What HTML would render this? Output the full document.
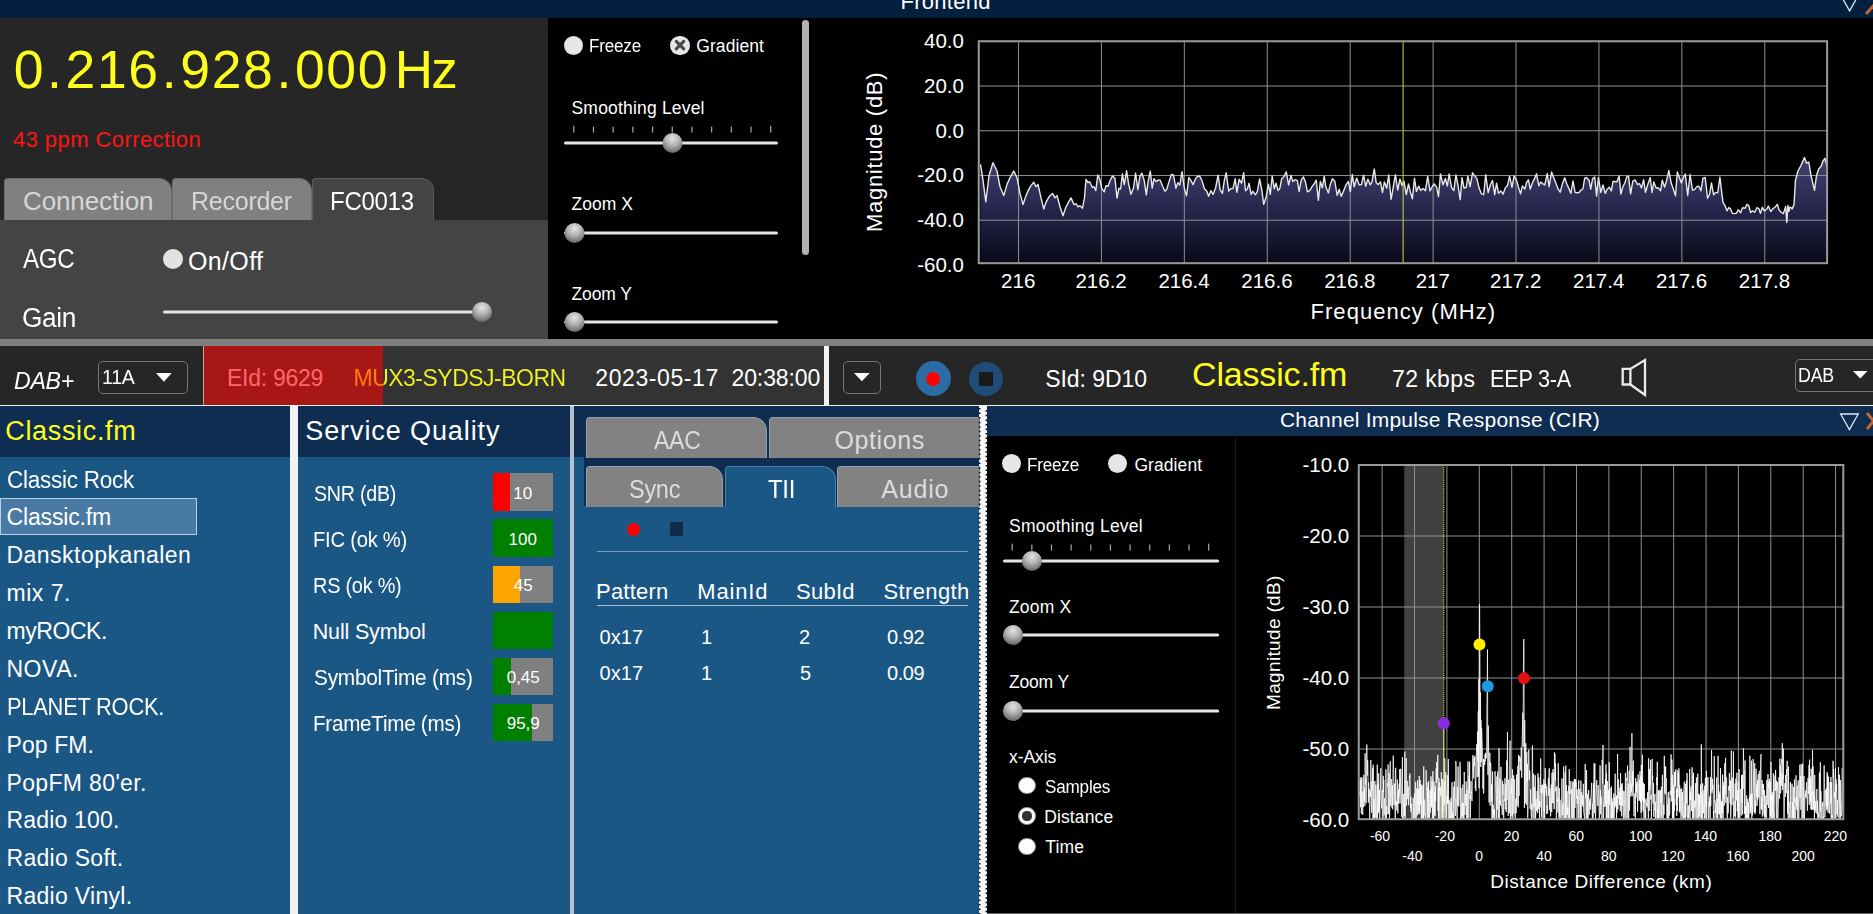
<!DOCTYPE html>
<html><head><meta charset="utf-8"><title>DAB</title><style>
html,body{margin:0;padding:0;background:#000;}
body{width:1873px;height:914px;overflow:hidden;position:relative;font-family:"Liberation Sans", sans-serif;}
#root{position:absolute;left:0;top:0;width:1873px;height:914px;overflow:hidden;background:#000;}
#root div,#root svg{position:absolute;}
.t{position:absolute;white-space:pre;line-height:1;font-family:"Liberation Sans", sans-serif;}
</style></head>
<body><div id="root">
<div style="left:0px;top:0px;width:1873px;height:18px;background:#03203f;"></div>
<div style="left:0px;top:18px;width:548px;height:202px;background:#262626;"></div>
<div style="left:0px;top:220px;width:548px;height:119px;background:#444444;"></div>
<div style="left:0px;top:339px;width:1873px;height:7px;background:#808080;"></div>
<div style="left:0px;top:346px;width:1873px;height:59px;background:#262626;"></div>
<div style="left:203px;top:346px;width:1px;height:59px;background:#c9a3a3;"></div>
<div style="left:204px;top:346px;width:179px;height:59px;background:#a81717;"></div>
<div style="left:383px;top:346px;width:441px;height:59px;background:#333333;"></div>
<div style="left:824px;top:346px;width:5px;height:59px;background:#f4f4f4;"></div>
<div style="left:0px;top:405px;width:1873px;height:1px;background:#f0f0f0;"></div>
<div style="left:0px;top:406px;width:290px;height:51px;background:#0f2d50;"></div>
<div style="left:0px;top:457px;width:290px;height:457px;background:#1b5785;"></div>
<div style="left:290px;top:406px;width:8px;height:508px;background:#f2f2f4;"></div>
<div style="left:298px;top:406px;width:272px;height:51px;background:#0f2d50;"></div>
<div style="left:298px;top:457px;width:272px;height:457px;background:#1b5785;"></div>
<div style="left:570px;top:406px;width:4px;height:508px;background:#b4c0cc;"></div>
<div style="left:574px;top:406px;width:405px;height:100px;background:#0f2d50;"></div>
<div style="left:574px;top:457px;width:10px;height:49px;background:#1b5785;"></div>
<div style="left:574px;top:506px;width:406px;height:408px;background:#1b5785;"></div>
<div style="left:979px;top:406px;width:7.5px;height:508px;background:#f6f6f8;"></div>
<div style="left:987px;top:406px;width:886px;height:30px;background:#0f2d50;"></div>
<div style="left:987px;top:913px;width:886px;height:1px;background:#666;"></div>
<span class="t" style="left:900.50px;top:-9px;font-size:22px;color:#ffffff;letter-spacing:0.283px;">Frontend</span>
<svg style="left:1838px;top:0" width="35" height="18" viewBox="0 0 35 18"><path d="M2.3 -5.6 L11.6 10.9 L20.9 -5.6" fill="none" stroke="#dfe6f0" stroke-width="1.3"/><path d="M28 14 L37 4" stroke="#c8642d" stroke-width="3"/></svg>
<span class="t" style="left:13.63px;top:43px;font-size:53.5px;color:#ffff1e;">0</span>
<span class="t" style="left:47.01px;top:43px;font-size:53.5px;color:#ffff1e;">.</span>
<span class="t" style="left:65.53px;top:43px;font-size:53.5px;color:#ffff1e;">2</span>
<span class="t" style="left:96.93px;top:43px;font-size:53.5px;color:#ffff1e;">1</span>
<span class="t" style="left:128.33px;top:43px;font-size:53.5px;color:#ffff1e;">6</span>
<span class="t" style="left:161.71px;top:43px;font-size:53.5px;color:#ffff1e;">.</span>
<span class="t" style="left:180.23px;top:43px;font-size:53.5px;color:#ffff1e;">9</span>
<span class="t" style="left:211.63px;top:43px;font-size:53.5px;color:#ffff1e;">2</span>
<span class="t" style="left:243.03px;top:43px;font-size:53.5px;color:#ffff1e;">8</span>
<span class="t" style="left:276.41px;top:43px;font-size:53.5px;color:#ffff1e;">.</span>
<span class="t" style="left:294.93px;top:43px;font-size:53.5px;color:#ffff1e;">0</span>
<span class="t" style="left:326.33px;top:43px;font-size:53.5px;color:#ffff1e;">0</span>
<span class="t" style="left:357.73px;top:43px;font-size:53.5px;color:#ffff1e;">0</span>
<span class="t" style="left:394.75px;top:43px;font-size:53px;color:#ffff1e;letter-spacing:-1.825px;">Hz</span>
<span class="t" style="left:13.00px;top:129px;font-size:22px;color:#ff1414;letter-spacing:0.423px;">43 ppm Correction</span>
<div style="left:4px;top:178px;width:168.3px;height:42px;background:#808080;border:1px solid #6c6c6c;border-bottom:none;border-radius:4px 13px 0 0;box-sizing:border-box;"></div>
<div style="left:172px;top:178px;width:140.2px;height:42px;background:#808080;border:1px solid #6c6c6c;border-bottom:none;border-radius:4px 13px 0 0;box-sizing:border-box;"></div>
<div style="left:312px;top:178px;width:122px;height:42px;background:#444444;border:1px solid #5e5e5e;border-bottom:none;border-radius:4px 13px 0 0;box-sizing:border-box;"></div>
<span class="t" style="left:23.00px;top:188px;font-size:26px;color:#d6d6d4;letter-spacing:-0.120px;">Connection</span>
<span class="t" style="left:190.57px;top:188px;font-size:26px;color:#d6d6d4;transform-origin:0 0;transform:scaleX(0.9652);letter-spacing:-0.312px;">Recorder</span>
<span class="t" style="left:330.15px;top:188px;font-size:26px;color:#ffffff;transform-origin:0 0;transform:scaleX(0.9240);letter-spacing:-0.312px;">FC0013</span>
<span class="t" style="left:22.50px;top:246px;font-size:27px;color:#ffffff;transform-origin:0 0;transform:scaleX(0.8934);letter-spacing:-0.324px;">AGC</span>
<div style="left:163px;top:249px;width:20px;height:20px;border-radius:50%;background:#e2e2e2;"></div>
<span class="t" style="left:188.00px;top:249px;font-size:25px;color:#ffffff;letter-spacing:0.353px;">On/Off</span>
<span class="t" style="left:21.53px;top:305px;font-size:27px;color:#ffffff;transform-origin:0 0;transform:scaleX(0.9714);letter-spacing:-0.324px;">Gain</span>
<svg width="0" height="0" style="left:0;top:0"><defs><radialGradient id="thumb" cx="50%" cy="28%" r="75%"><stop offset="0" stop-color="#e4e4e4"/><stop offset="0.45" stop-color="#b4b4b4"/><stop offset="1" stop-color="#5e5e5e"/></radialGradient></defs></svg>
<svg style="left:149px;top:290px" width="355" height="36" viewBox="149 290 355 36"><rect x="163" y="310.4" width="327" height="3.2" rx="1.6" fill="#e6e6e6"/><circle cx="482" cy="312" r="10" fill="url(#thumb)"/></svg>
<div style="left:563.6999999999999px;top:35.5px;width:19.2px;height:19.2px;border-radius:50%;background:#e6e6e6;"></div>
<span class="t" style="left:588.52px;top:38px;font-size:17.5px;color:#ffffff;transform-origin:0 0;transform:scaleX(0.9771);letter-spacing:-0.210px;">Freeze</span>
<div style="left:670.4px;top:35.5px;width:19.2px;height:19.2px;border-radius:50%;background:#e6e6e6;"></div>
<svg style="left:670px;top:35px" width="20" height="20" viewBox="0 0 20 20"><path d="M6.3 6.4 L13.7 13.8 M13.7 6.4 L6.3 13.8" stroke="#484848" stroke-width="3.1" stroke-linecap="round"/></svg>
<span class="t" style="left:696.30px;top:38px;font-size:17.5px;color:#ffffff;letter-spacing:0.063px;">Gradient</span>
<span class="t" style="left:571.50px;top:100px;font-size:17.5px;color:#ffffff;letter-spacing:0.188px;">Smoothing Level</span>
<svg style="left:550px;top:120.6px" width="242" height="36" viewBox="550 120.6 242 36"><rect x="573.20" y="125.40" width="1.2" height="6.70" fill="#a8a8a8"/><rect x="592.89" y="126.20" width="1.2" height="5.90" fill="#a8a8a8"/><rect x="612.58" y="126.20" width="1.2" height="5.90" fill="#a8a8a8"/><rect x="632.27" y="126.20" width="1.2" height="5.90" fill="#a8a8a8"/><rect x="651.96" y="126.20" width="1.2" height="5.90" fill="#a8a8a8"/><rect x="671.65" y="126.20" width="1.2" height="5.90" fill="#a8a8a8"/><rect x="691.34" y="126.20" width="1.2" height="5.90" fill="#a8a8a8"/><rect x="711.03" y="126.20" width="1.2" height="5.90" fill="#a8a8a8"/><rect x="730.72" y="126.20" width="1.2" height="5.90" fill="#a8a8a8"/><rect x="750.41" y="126.20" width="1.2" height="5.90" fill="#a8a8a8"/><rect x="770.10" y="125.40" width="1.2" height="6.70" fill="#a8a8a8"/><rect x="564" y="141.0" width="214" height="3.2" rx="1.6" fill="#e6e6e6"/><circle cx="672.5" cy="142.6" r="10" fill="url(#thumb)"/></svg>
<span class="t" style="left:571.50px;top:196px;font-size:17.5px;color:#ffffff;letter-spacing:0.041px;">Zoom X</span>
<svg style="left:550px;top:210.6px" width="242" height="36" viewBox="550 210.6 242 36"><rect x="564" y="231.0" width="214" height="3.2" rx="1.6" fill="#e6e6e6"/><circle cx="574.5" cy="232.6" r="10" fill="url(#thumb)"/></svg>
<span class="t" style="left:571.50px;top:286px;font-size:17.5px;color:#ffffff;letter-spacing:-0.119px;">Zoom Y</span>
<svg style="left:550px;top:300.4px" width="242" height="36" viewBox="550 300.4 242 36"><rect x="564" y="320.79999999999995" width="214" height="3.2" rx="1.6" fill="#e6e6e6"/><circle cx="574.5" cy="322.4" r="10" fill="url(#thumb)"/></svg>
<div style="left:802px;top:20px;width:7px;height:235px;border-radius:3.5px;background:#b2b2b2;"></div>
<span class="t" style="left:13.75px;top:369px;font-size:24.5px;color:#ffffff;transform-origin:0 0;transform:scaleX(0.9450);letter-spacing:-0.294px;font-style:italic;">DAB+</span>
<div style="left:98px;top:361px;width:90px;height:33px;border:1.5px solid #767676;border-radius:5px;box-sizing:border-box;background:#262626;"></div>
<span class="t" style="left:101.52px;top:367px;font-size:20px;color:#ffffff;transform-origin:0 0;transform:scaleX(0.9765);letter-spacing:-0.240px;">11A</span>
<svg style="left:153.5px;top:371px" width="19.75" height="12.75" viewBox="153.5 371 19.75 12.75"><path d="M155.5 373 L171.25 373 L163.375 381.75 Z" fill="#ffffff"/></svg>
<span class="t" style="left:227.00px;top:367px;font-size:23px;color:#ff6767;letter-spacing:-0.272px;">EId: 9629</span>
<span class="t" style="left:353.50px;top:367px;font-size:23px;color:#ff7f0e;letter-spacing:-0.514px;color:transparent;background:linear-gradient(90deg,#ff7f0e 0,#ff7f0e 29.70px,#f2f21e 29.70px);-webkit-background-clip:text;background-clip:text;">MUX3-SYDSJ-BORN</span>
<span class="t" style="left:595.25px;top:367px;font-size:23px;color:#ffffff;letter-spacing:0.599px;">2023-05-17</span>
<span class="t" style="left:731.50px;top:367px;font-size:23px;color:#ffffff;letter-spacing:-0.105px;">20:38:00</span>
<div style="left:842.6px;top:361px;width:38px;height:33px;border:1.5px solid #767676;border-radius:5px;box-sizing:border-box;background:#262626;"></div>
<svg style="left:851.75px;top:371px" width="19.75" height="12.25" viewBox="851.75 371 19.75 12.25"><path d="M853.75 373 L869.5 373 L861.625 381.25 Z" fill="#ffffff"/></svg>
<div style="left:915.75px;top:361.25px;width:35.0px;height:35.0px;border-radius:50%;background:#2a6ca3;"></div>
<div style="left:926.25px;top:371.75px;width:14px;height:14px;border-radius:50%;background:#ff0000;"></div>
<div style="left:969.25px;top:361.75px;width:34px;height:34px;border-radius:50%;background:#1f4d78;"></div>
<div style="left:979.25px;top:371.5px;width:14px;height:14px;background:#1a1a1a;"></div>
<span class="t" style="left:1045.25px;top:368px;font-size:23px;color:#ffffff;letter-spacing:-0.062px;">SId: 9D10</span>
<span class="t" style="left:1192.00px;top:357px;font-size:34px;color:#ffff1e;letter-spacing:-0.163px;">Classic.fm</span>
<span class="t" style="left:1392.00px;top:368px;font-size:23px;color:#ffffff;letter-spacing:0.407px;">72 kbps</span>
<span class="t" style="left:1489.81px;top:368px;font-size:23px;color:#ffffff;transform-origin:0 0;transform:scaleX(0.9425);letter-spacing:-0.276px;">EEP 3-A</span>
<svg style="left:1616px;top:354px" width="40" height="48" viewBox="1616 354 40 48"><path d="M1622.7 368.9 H1630.4 L1645 360 V395 L1630.4 384.5 H1622.7 Z M1630.4 368.9 V384.5" fill="none" stroke="#ececec" stroke-width="2.3" stroke-linejoin="miter"/></svg>
<div style="left:1795px;top:359.2px;width:90px;height:32.6px;border:1.5px solid #767676;border-radius:5px;box-sizing:border-box;background:#262626;"></div>
<span class="t" style="left:1797.86px;top:365px;font-size:20px;color:#ffffff;transform-origin:0 0;transform:scaleX(0.8905);letter-spacing:-0.240px;">DAB</span>
<svg style="left:1850.5px;top:369.25px" width="18.5" height="11.5" viewBox="1850.5 369.25 18.5 11.5"><path d="M1852.5 371.25 L1867 371.25 L1859.75 378.75 Z" fill="#ffffff"/></svg>
<span class="t" style="left:5.25px;top:418px;font-size:27px;color:#ffff1e;letter-spacing:0.665px;">Classic.fm</span>
<div style="left:0px;top:497.5px;width:197px;height:37px;background:#497aa3;border:1px solid #b9cfe2;box-sizing:border-box;"></div>
<span class="t" style="left:6.52px;top:469px;font-size:23px;color:#ffffff;transform-origin:0 0;transform:scaleX(0.9797);letter-spacing:-0.276px;">Classic Rock</span>
<span class="t" style="left:6.50px;top:506px;font-size:23px;color:#ffffff;letter-spacing:-0.156px;">Classic.fm</span>
<span class="t" style="left:6.50px;top:544px;font-size:23px;color:#ffffff;letter-spacing:0.468px;">Dansktopkanalen</span>
<span class="t" style="left:6.50px;top:582px;font-size:23px;color:#ffffff;letter-spacing:0.510px;">mix 7.</span>
<span class="t" style="left:6.50px;top:620px;font-size:23px;color:#ffffff;letter-spacing:-0.435px;">myROCK.</span>
<span class="t" style="left:6.50px;top:658px;font-size:23px;color:#ffffff;letter-spacing:0.506px;">NOVA.</span>
<span class="t" style="left:6.55px;top:696px;font-size:23px;color:#ffffff;transform-origin:0 0;transform:scaleX(0.9524);letter-spacing:-0.276px;">PLANET ROCK.</span>
<span class="t" style="left:6.50px;top:734px;font-size:23px;color:#ffffff;letter-spacing:0.080px;">Pop FM.</span>
<span class="t" style="left:6.50px;top:772px;font-size:23px;color:#ffffff;letter-spacing:0.347px;">PopFM 80'er.</span>
<span class="t" style="left:6.50px;top:809px;font-size:23px;color:#ffffff;letter-spacing:0.182px;">Radio 100.</span>
<span class="t" style="left:6.50px;top:847px;font-size:23px;color:#ffffff;letter-spacing:0.285px;">Radio Soft.</span>
<span class="t" style="left:6.50px;top:885px;font-size:23px;color:#ffffff;letter-spacing:0.303px;">Radio Vinyl.</span>
<span class="t" style="left:305.25px;top:418px;font-size:27px;color:#ffffff;letter-spacing:0.906px;">Service Quality</span>
<span class="t" style="left:313.75px;top:484px;font-size:21.5px;color:#ffffff;transform-origin:0 0;transform:scaleX(0.9127);letter-spacing:-0.258px;">SNR (dB)</span>
<div style="left:493px;top:473.3px;width:60px;height:37.3px;background:#808080;"></div>
<div style="left:493px;top:473.3px;width:17px;height:37.3px;background:#ff0000;"></div>
<span class="t" style="left:513.27px;top:485px;font-size:17px;color:#ffffff;">10</span>
<span class="t" style="left:312.81px;top:530px;font-size:21.5px;color:#ffffff;transform-origin:0 0;transform:scaleX(0.9390);letter-spacing:-0.258px;">FIC (ok %)</span>
<div style="left:493px;top:519.4px;width:60px;height:37.3px;background:#808080;"></div>
<div style="left:493px;top:519.4px;width:60px;height:37.3px;background:#008000;"></div>
<span class="t" style="left:508.55px;top:531px;font-size:17px;color:#ffffff;">100</span>
<span class="t" style="left:312.82px;top:576px;font-size:21.5px;color:#ffffff;transform-origin:0 0;transform:scaleX(0.9255);letter-spacing:-0.258px;">RS (ok %)</span>
<div style="left:493px;top:565.5px;width:60px;height:37.3px;background:#808080;"></div>
<div style="left:493px;top:565.5px;width:27px;height:37.3px;background:#ffa500;"></div>
<span class="t" style="left:513.77px;top:577px;font-size:17px;color:#ffffff;">45</span>
<span class="t" style="left:312.75px;top:622px;font-size:21.5px;color:#ffffff;letter-spacing:-0.168px;">Null Symbol</span>
<div style="left:493px;top:611.6px;width:60px;height:37.3px;background:#808080;"></div>
<div style="left:493px;top:611.6px;width:60px;height:37.3px;background:#008000;"></div>
<span class="t" style="left:313.75px;top:668px;font-size:21.5px;color:#ffffff;transform-origin:0 0;transform:scaleX(0.9687);letter-spacing:-0.258px;">SymbolTime (ms)</span>
<div style="left:493px;top:657.7px;width:60px;height:37.3px;background:#808080;"></div>
<div style="left:493px;top:657.7px;width:18.2px;height:37.3px;background:#008000;"></div>
<span class="t" style="left:506.68px;top:669px;font-size:17px;color:#ffffff;">0,45</span>
<span class="t" style="left:312.79px;top:714px;font-size:21.5px;color:#ffffff;transform-origin:0 0;transform:scaleX(0.9588);letter-spacing:-0.258px;">FrameTime (ms)</span>
<div style="left:493px;top:703.8px;width:60px;height:37.3px;background:#808080;"></div>
<div style="left:493px;top:703.8px;width:38.5px;height:37.3px;background:#008000;"></div>
<span class="t" style="left:506.68px;top:715px;font-size:17px;color:#ffffff;">95,9</span>
<div style="left:586px;top:417px;width:181px;height:40.5px;background:#828282;border:1px solid #93a0ad;border-bottom:none;border-radius:4px 14px 0 0;box-sizing:border-box;"></div>
<div style="left:768.5px;top:417px;width:211.5px;height:40.5px;overflow:hidden;"><div style="left:0;top:0;width:260px;height:40.5px;background:#828282;border:1px solid #93a0ad;border-bottom:none;border-radius:4px 14px 0 0;box-sizing:border-box;"></div></div>
<div style="left:586px;top:466px;width:137px;height:40.5px;background:#828282;border:1px solid #93a0ad;border-bottom:none;border-radius:4px 14px 0 0;box-sizing:border-box;"></div>
<div style="left:724.5px;top:466px;width:111.5px;height:40.5px;background:#1b5785;border:1px solid #4f7ea6;border-bottom:none;border-radius:4px 14px 0 0;box-sizing:border-box;"></div>
<div style="left:837px;top:466px;width:143px;height:40.5px;overflow:hidden;"><div style="left:0;top:0;width:200px;height:40.5px;background:#828282;border:1px solid #93a0ad;border-bottom:none;border-radius:4px 14px 0 0;box-sizing:border-box;"></div></div>
<span class="t" style="left:653.75px;top:428px;font-size:25px;color:#dcdcdc;transform-origin:0 0;transform:scaleX(0.9212);letter-spacing:-0.300px;">AAC</span>
<span class="t" style="left:834.50px;top:428px;font-size:25px;color:#dcdcdc;letter-spacing:0.599px;">Options</span>
<span class="t" style="left:629.06px;top:477px;font-size:25px;color:#dcdcdc;transform-origin:0 0;transform:scaleX(0.9402);letter-spacing:-0.300px;">Sync</span>
<span class="t" style="left:767.50px;top:477px;font-size:25px;color:#ffffff;transform-origin:0 0;transform:scaleX(0.9580);letter-spacing:-0.300px;">TII</span>
<span class="t" style="left:881.25px;top:477px;font-size:25px;color:#dcdcdc;letter-spacing:0.803px;">Audio</span>
<div style="left:626.5px;top:522.5px;width:13.5px;height:13.5px;border-radius:50%;background:#ff0000;"></div>
<div style="left:670px;top:522px;width:13px;height:13.75px;background:#0f2d4a;"></div>
<div style="left:597px;top:551px;width:371px;height:1px;background:#6f9bc0;"></div>
<span class="t" style="left:596.00px;top:581px;font-size:22px;color:#ffffff;letter-spacing:0.217px;">Pattern</span>
<span class="t" style="left:697.25px;top:581px;font-size:22px;color:#ffffff;letter-spacing:0.841px;">MainId</span>
<span class="t" style="left:796.00px;top:581px;font-size:22px;color:#ffffff;letter-spacing:0.248px;">SubId</span>
<span class="t" style="left:883.50px;top:581px;font-size:22px;color:#ffffff;letter-spacing:0.367px;">Strength</span>
<div style="left:597px;top:605px;width:371px;height:1px;background:#aebfd0;"></div>
<span class="t" style="left:599.50px;top:627px;font-size:20px;color:#ffffff;letter-spacing:0.085px;">0x17</span>
<span class="t" style="left:701.00px;top:627px;font-size:20px;color:#ffffff;">1</span>
<span class="t" style="left:799.00px;top:627px;font-size:20px;color:#ffffff;">2</span>
<span class="t" style="left:887.00px;top:627px;font-size:20px;color:#ffffff;letter-spacing:-0.434px;">0.92</span>
<span class="t" style="left:599.50px;top:663px;font-size:20px;color:#ffffff;letter-spacing:0.085px;">0x17</span>
<span class="t" style="left:701.00px;top:663px;font-size:20px;color:#ffffff;">1</span>
<span class="t" style="left:800.00px;top:663px;font-size:20px;color:#ffffff;">5</span>
<span class="t" style="left:887.00px;top:663px;font-size:20px;color:#ffffff;letter-spacing:-0.434px;">0.09</span>
<svg style="left:978px;top:406px" width="10" height="508"><line x1="1.6" y1="2" x2="1.6" y2="508" stroke="#0a0a14" stroke-width="1.7" stroke-dasharray="1.5 3.05"/><line x1="8.3" y1="4.3" x2="8.3" y2="508" stroke="#0a0a14" stroke-width="1.5" stroke-dasharray="1.5 3.05"/></svg>
<span class="t" style="left:1280.00px;top:409px;font-size:21px;color:#ffffff;letter-spacing:0.199px;">Channel Impulse Response (CIR)</span>
<svg style="left:1836px;top:408px" width="37" height="28" viewBox="1836 408 37 28"><path d="M1840.6 414 L1858.2 414 L1849.4 429.6 Z" fill="none" stroke="#dfe6f0" stroke-width="1.3"/><path d="M1867 413 L1880 429 M1867 429 L1880 413" stroke="#c8642d" stroke-width="3"/></svg>
<div style="left:1002.3px;top:454.1px;width:19.0px;height:19.0px;border-radius:50%;background:#e6e6e6;"></div>
<span class="t" style="left:1026.52px;top:457px;font-size:17.5px;color:#ffffff;transform-origin:0 0;transform:scaleX(0.9771);letter-spacing:-0.210px;">Freeze</span>
<div style="left:1108.1px;top:454.1px;width:19.0px;height:19.0px;border-radius:50%;background:#e6e6e6;"></div>
<span class="t" style="left:1134.40px;top:457px;font-size:17.5px;color:#ffffff;letter-spacing:0.077px;">Gradient</span>
<span class="t" style="left:1009.00px;top:518px;font-size:17.5px;color:#ffffff;letter-spacing:0.238px;">Smoothing Level</span>
<svg style="left:988.6px;top:538.8px" width="244.19999999999993" height="36" viewBox="988.6 538.8 244.19999999999993 36"><rect x="1011.20" y="543.50" width="1.2" height="6.80" fill="#a8a8a8"/><rect x="1030.85" y="544.30" width="1.2" height="6.00" fill="#a8a8a8"/><rect x="1050.49" y="544.30" width="1.2" height="6.00" fill="#a8a8a8"/><rect x="1070.13" y="544.30" width="1.2" height="6.00" fill="#a8a8a8"/><rect x="1089.78" y="544.30" width="1.2" height="6.00" fill="#a8a8a8"/><rect x="1109.43" y="544.30" width="1.2" height="6.00" fill="#a8a8a8"/><rect x="1129.07" y="544.30" width="1.2" height="6.00" fill="#a8a8a8"/><rect x="1148.72" y="544.30" width="1.2" height="6.00" fill="#a8a8a8"/><rect x="1168.36" y="544.30" width="1.2" height="6.00" fill="#a8a8a8"/><rect x="1188.01" y="544.30" width="1.2" height="6.00" fill="#a8a8a8"/><rect x="1207.65" y="543.50" width="1.2" height="6.80" fill="#a8a8a8"/><rect x="1002.6" y="559.1999999999999" width="216.19999999999993" height="3.2" rx="1.6" fill="#e6e6e6"/><circle cx="1031.5" cy="560.8" r="10" fill="url(#thumb)"/></svg>
<span class="t" style="left:1009.00px;top:599px;font-size:17.5px;color:#ffffff;letter-spacing:0.161px;">Zoom X</span>
<svg style="left:988.6px;top:613.4px" width="244.19999999999993" height="36" viewBox="988.6 613.4 244.19999999999993 36"><rect x="1002.6" y="633.8" width="216.19999999999993" height="3.2" rx="1.6" fill="#e6e6e6"/><circle cx="1012.6" cy="635.4" r="10" fill="url(#thumb)"/></svg>
<span class="t" style="left:1009.00px;top:674px;font-size:17.5px;color:#ffffff;letter-spacing:-0.179px;">Zoom Y</span>
<svg style="left:988.6px;top:688.7px" width="244.19999999999993" height="36" viewBox="988.6 688.7 244.19999999999993 36"><rect x="1002.6" y="709.1" width="216.19999999999993" height="3.2" rx="1.6" fill="#e6e6e6"/><circle cx="1012.5" cy="710.7" r="10" fill="url(#thumb)"/></svg>
<span class="t" style="left:1009.00px;top:749px;font-size:17.5px;color:#ffffff;letter-spacing:-0.078px;">x-Axis</span>
<div style="left:1018.3px;top:777.0999999999999px;width:17.4px;height:17.4px;border-radius:50%;background:#ffffff;border:1.6px solid #8c8c8c;box-sizing:border-box;"></div>
<span class="t" style="left:1045.20px;top:779px;font-size:17.5px;color:#ffffff;transform-origin:0 0;transform:scaleX(0.9780);letter-spacing:-0.210px;">Samples</span>
<div style="left:1018.3px;top:807.3px;width:17.4px;height:17.4px;border-radius:50%;background:#ffffff;border:1.6px solid #8c8c8c;box-sizing:border-box;"></div>
<div style="left:1022.4px;top:811.4px;width:9.2px;height:9.2px;border-radius:50%;background:#333333;"></div>
<span class="t" style="left:1044.20px;top:809px;font-size:17.5px;color:#ffffff;letter-spacing:0.135px;">Distance</span>
<div style="left:1018.3px;top:837.6999999999999px;width:17.4px;height:17.4px;border-radius:50%;background:#ffffff;border:1.6px solid #8c8c8c;box-sizing:border-box;"></div>
<span class="t" style="left:1045.20px;top:839px;font-size:17.5px;color:#ffffff;letter-spacing:0.198px;">Time</span>
<div style="left:1234.5px;top:437px;width:1px;height:476px;background:#1c1c1c;"></div>
<svg style="left:970px;top:30px" width="870" height="245" viewBox="970 30 870 245"><defs><linearGradient id="sg" gradientUnits="userSpaceOnUse" x1="0" y1="160" x2="0" y2="264"><stop offset="0" stop-color="#40406f"/><stop offset="0.5" stop-color="#24244a"/><stop offset="1" stop-color="#090918"/></linearGradient></defs><path d="M980.5 164.3 L983.0 180.0 L985.8 201.9 L989.0 175.5 L993.0 162.7 L997.0 171.0 L1000.0 186.7 L1003.8 195.6 L1007.0 184.4 L1010.0 177.7 L1013.8 171.0 L1017.0 177.7 L1020.0 193.4 L1023.0 204.6 L1026.0 195.6 L1029.0 188.9 L1031.0 185.6 L1033.8 182.2 L1036.0 186.7 L1038.0 184.4 L1041.0 197.9 L1043.8 209.1 L1046.0 202.3 L1049.0 196.8 L1052.5 193.4 L1055.0 197.9 L1057.0 195.6 L1060.0 206.8 L1063.0 215.8 L1066.0 206.8 L1068.5 202.3 L1071.0 197.9 L1074.0 204.6 L1076.0 203.5 L1078.0 206.8 L1080.0 205.7 L1082.5 208.2 L1084.5 197.9 L1086.0 179.3 L1088.0 182.7 L1089.7 181.7 L1092.2 187.2 L1094.0 186.8 L1095.8 190.6 L1097.8 174.9 L1099.8 179.4 L1101.7 188.3 L1104.2 191.9 L1106.0 185.7 L1108.0 186.2 L1110.4 179.8 L1112.6 175.9 L1115.0 178.5 L1117.0 198.1 L1118.9 188.3 L1120.6 189.0 L1122.4 173.9 L1124.2 184.6 L1126.6 170.8 L1128.6 183.8 L1131.0 194.3 L1133.5 188.0 L1135.6 173.0 L1137.8 189.7 L1140.0 176.0 L1141.9 173.2 L1144.2 180.4 L1146.3 194.8 L1148.2 180.9 L1150.3 171.1 L1152.2 188.2 L1154.0 178.6 L1156.2 181.6 L1158.5 179.8 L1160.3 180.4 L1162.7 186.3 L1164.9 191.2 L1166.8 189.3 L1169.2 180.9 L1171.4 174.4 L1173.5 175.0 L1175.9 188.3 L1177.8 182.7 L1179.8 185.0 L1182.0 171.6 L1184.4 188.6 L1186.5 195.8 L1188.8 177.5 L1190.8 180.4 L1193.1 184.7 L1195.4 178.9 L1197.7 176.1 L1199.8 176.3 L1202.0 180.6 L1204.4 188.8 L1206.9 191.2 L1208.6 196.3 L1210.9 190.6 L1213.1 194.3 L1215.6 188.0 L1218.1 175.1 L1220.1 189.7 L1222.4 193.5 L1224.4 179.9 L1226.2 172.8 L1228.7 191.1 L1230.6 188.8 L1233.0 188.4 L1235.2 178.8 L1236.9 192.3 L1239.1 179.3 L1241.5 183.2 L1243.7 172.7 L1245.5 190.7 L1247.2 189.3 L1249.1 183.3 L1251.1 194.5 L1252.8 191.2 L1255.3 194.8 L1257.3 191.7 L1259.6 178.9 L1261.9 190.5 L1263.7 204.3 L1266.0 197.6 L1268.4 184.1 L1270.3 194.4 L1272.2 176.0 L1274.3 188.8 L1276.0 183.1 L1278.1 190.6 L1279.9 188.1 L1281.6 178.8 L1283.9 176.8 L1286.3 171.9 L1288.6 185.0 L1291.0 175.1 L1292.8 181.5 L1295.1 179.6 L1297.4 180.7 L1299.1 191.4 L1301.3 179.9 L1303.5 176.9 L1305.6 182.3 L1307.4 191.9 L1309.6 190.6 L1312.1 186.6 L1314.4 183.5 L1316.2 180.0 L1318.4 200.3 L1320.3 181.5 L1322.4 187.8 L1324.2 176.2 L1325.9 187.1 L1328.4 193.0 L1330.2 184.7 L1332.4 178.7 L1334.8 181.2 L1337.2 195.5 L1339.2 189.3 L1341.2 196.4 L1343.6 190.9 L1345.9 184.9 L1348.4 181.5 L1350.4 191.6 L1352.3 174.4 L1354.2 186.9 L1356.6 178.1 L1359.1 184.8 L1361.4 184.5 L1363.6 175.1 L1365.7 186.4 L1367.9 179.1 L1370.1 184.8 L1371.9 182.1 L1374.3 169.0 L1376.2 182.7 L1378.1 184.4 L1380.5 182.0 L1382.5 192.5 L1384.4 181.9 L1386.8 188.2 L1388.7 175.0 L1391.1 199.5 L1393.3 186.8 L1395.4 174.7 L1397.7 190.1 L1399.9 179.1 L1402.1 185.5 L1403.9 181.1 L1406.3 194.7 L1408.5 183.9 L1410.3 191.7 L1412.4 198.8 L1414.5 178.3 L1416.4 191.4 L1418.7 186.2 L1420.7 190.4 L1423.1 188.5 L1425.4 190.8 L1427.7 176.3 L1430.0 190.9 L1432.3 186.5 L1434.2 184.0 L1436.7 187.4 L1438.5 196.5 L1440.5 173.9 L1443.0 184.8 L1445.4 178.5 L1447.4 186.0 L1449.1 174.0 L1451.6 187.7 L1453.9 190.5 L1455.9 174.9 L1457.9 185.0 L1460.2 199.6 L1462.0 177.6 L1464.0 188.0 L1466.2 187.5 L1467.9 176.1 L1470.1 186.7 L1472.5 172.8 L1474.4 175.4 L1476.8 178.4 L1479.1 188.1 L1481.4 193.8 L1483.7 194.6 L1485.7 174.8 L1488.2 192.6 L1490.4 184.8 L1492.5 180.6 L1494.7 194.7 L1496.6 183.2 L1498.5 193.2 L1500.9 190.9 L1503.0 194.2 L1505.3 187.9 L1507.6 185.3 L1509.6 176.2 L1512.0 187.4 L1514.1 175.9 L1516.3 179.6 L1518.3 186.6 L1520.5 193.9 L1522.4 185.9 L1524.8 189.1 L1526.6 182.3 L1528.4 179.8 L1530.3 189.0 L1532.3 183.0 L1534.8 177.9 L1536.5 173.8 L1538.9 185.8 L1540.6 182.0 L1543.0 183.9 L1544.8 184.9 L1547.3 173.5 L1549.1 186.7 L1551.6 171.9 L1554.0 178.5 L1555.8 183.1 L1558.2 189.2 L1560.2 192.2 L1562.5 183.4 L1564.7 177.8 L1566.8 184.0 L1568.8 188.2 L1570.8 193.3 L1573.0 181.0 L1575.1 192.4 L1576.9 192.7 L1579.0 192.5 L1580.8 190.2 L1582.9 189.0 L1584.7 178.2 L1586.5 177.5 L1589.0 180.2 L1590.7 189.2 L1592.6 178.5 L1594.7 177.1 L1596.6 196.1 L1598.4 177.6 L1600.8 192.5 L1603.0 185.0 L1605.2 193.4 L1607.4 189.0 L1609.3 187.2 L1611.3 191.0 L1613.1 181.1 L1615.3 181.8 L1617.0 181.7 L1619.1 175.9 L1620.9 194.1 L1622.7 187.3 L1624.9 182.8 L1626.7 176.9 L1628.5 176.1 L1630.6 193.9 L1632.8 181.1 L1635.2 180.0 L1637.6 184.6 L1639.4 183.5 L1641.5 187.9 L1643.6 179.7 L1645.5 192.3 L1647.8 184.5 L1650.2 177.6 L1652.1 192.5 L1653.8 182.0 L1656.1 188.0 L1658.1 187.7 L1660.6 190.8 L1662.3 180.1 L1664.6 187.2 L1666.5 180.9 L1668.8 170.5 L1671.2 183.1 L1673.3 189.0 L1675.5 195.8 L1677.3 171.9 L1679.1 176.8 L1681.4 183.1 L1683.5 177.1 L1685.3 174.0 L1687.7 195.5 L1690.1 174.5 L1692.5 190.2 L1694.8 189.4 L1696.8 186.7 L1698.8 186.1 L1700.9 190.8 L1703.0 178.1 L1705.2 177.5 L1707.6 198.3 L1709.5 194.5 L1711.5 182.9 L1713.6 194.8 L1715.6 192.4 L1717.7 192.9 L1719.9 177.2 L1721.0 186.7 L1723.0 202.3 L1725.0 205.7 L1727.0 210.8 L1728.8 207.6 L1730.4 208.7 L1732.4 213.4 L1734.5 213.6 L1736.5 213.3 L1738.2 209.8 L1740.6 212.8 L1742.5 207.8 L1745.0 208.3 L1747.0 204.4 L1748.7 205.5 L1750.6 212.6 L1752.3 210.9 L1754.7 212.2 L1756.9 207.7 L1758.8 208.6 L1760.5 213.4 L1762.3 207.3 L1764.3 210.9 L1766.5 209.5 L1768.4 206.2 L1770.7 211.6 L1772.9 208.8 L1775.4 206.8 L1777.3 204.3 L1779.0 209.9 L1781.3 212.5 L1783.4 213.6 L1785.7 206.5 L1786.8 222.5 L1787.9 205.4 L1789.0 211.3 L1789.8 207.1 L1792.0 208.3 L1792.0 209.1 L1794.0 204.6 L1795.5 180.0 L1798.0 171.0 L1801.0 165.4 L1804.5 157.6 L1806.5 163.2 L1808.8 162.1 L1811.0 175.5 L1814.5 190.3 L1816.5 175.5 L1818.8 168.8 L1821.0 166.6 L1823.0 161.0 L1825.0 158.3 L1827.0 166.6 L1827.0 263.2 L980.5 263.2 Z" fill="url(#sg)"/><rect x="1018.00" y="41.25" width="1" height="221.95" fill="#8f8f8f"/><rect x="1100.92" y="41.25" width="1" height="221.95" fill="#8f8f8f"/><rect x="1183.84" y="41.25" width="1" height="221.95" fill="#8f8f8f"/><rect x="1266.76" y="41.25" width="1" height="221.95" fill="#8f8f8f"/><rect x="1349.68" y="41.25" width="1" height="221.95" fill="#8f8f8f"/><rect x="1432.60" y="41.25" width="1" height="221.95" fill="#8f8f8f"/><rect x="1515.52" y="41.25" width="1" height="221.95" fill="#8f8f8f"/><rect x="1598.44" y="41.25" width="1" height="221.95" fill="#8f8f8f"/><rect x="1681.36" y="41.25" width="1" height="221.95" fill="#8f8f8f"/><rect x="1764.28" y="41.25" width="1" height="221.95" fill="#8f8f8f"/><rect x="978.75" y="85.50" width="848.3499999999999" height="1" fill="#8f8f8f"/><rect x="978.75" y="130.25" width="848.3499999999999" height="1" fill="#8f8f8f"/><rect x="978.75" y="175.00" width="848.3499999999999" height="1" fill="#8f8f8f"/><rect x="978.75" y="219.75" width="848.3499999999999" height="1" fill="#8f8f8f"/><path d="M980.5 164.3 L983.0 180.0 L985.8 201.9 L989.0 175.5 L993.0 162.7 L997.0 171.0 L1000.0 186.7 L1003.8 195.6 L1007.0 184.4 L1010.0 177.7 L1013.8 171.0 L1017.0 177.7 L1020.0 193.4 L1023.0 204.6 L1026.0 195.6 L1029.0 188.9 L1031.0 185.6 L1033.8 182.2 L1036.0 186.7 L1038.0 184.4 L1041.0 197.9 L1043.8 209.1 L1046.0 202.3 L1049.0 196.8 L1052.5 193.4 L1055.0 197.9 L1057.0 195.6 L1060.0 206.8 L1063.0 215.8 L1066.0 206.8 L1068.5 202.3 L1071.0 197.9 L1074.0 204.6 L1076.0 203.5 L1078.0 206.8 L1080.0 205.7 L1082.5 208.2 L1084.5 197.9 L1086.0 179.3 L1088.0 182.7 L1089.7 181.7 L1092.2 187.2 L1094.0 186.8 L1095.8 190.6 L1097.8 174.9 L1099.8 179.4 L1101.7 188.3 L1104.2 191.9 L1106.0 185.7 L1108.0 186.2 L1110.4 179.8 L1112.6 175.9 L1115.0 178.5 L1117.0 198.1 L1118.9 188.3 L1120.6 189.0 L1122.4 173.9 L1124.2 184.6 L1126.6 170.8 L1128.6 183.8 L1131.0 194.3 L1133.5 188.0 L1135.6 173.0 L1137.8 189.7 L1140.0 176.0 L1141.9 173.2 L1144.2 180.4 L1146.3 194.8 L1148.2 180.9 L1150.3 171.1 L1152.2 188.2 L1154.0 178.6 L1156.2 181.6 L1158.5 179.8 L1160.3 180.4 L1162.7 186.3 L1164.9 191.2 L1166.8 189.3 L1169.2 180.9 L1171.4 174.4 L1173.5 175.0 L1175.9 188.3 L1177.8 182.7 L1179.8 185.0 L1182.0 171.6 L1184.4 188.6 L1186.5 195.8 L1188.8 177.5 L1190.8 180.4 L1193.1 184.7 L1195.4 178.9 L1197.7 176.1 L1199.8 176.3 L1202.0 180.6 L1204.4 188.8 L1206.9 191.2 L1208.6 196.3 L1210.9 190.6 L1213.1 194.3 L1215.6 188.0 L1218.1 175.1 L1220.1 189.7 L1222.4 193.5 L1224.4 179.9 L1226.2 172.8 L1228.7 191.1 L1230.6 188.8 L1233.0 188.4 L1235.2 178.8 L1236.9 192.3 L1239.1 179.3 L1241.5 183.2 L1243.7 172.7 L1245.5 190.7 L1247.2 189.3 L1249.1 183.3 L1251.1 194.5 L1252.8 191.2 L1255.3 194.8 L1257.3 191.7 L1259.6 178.9 L1261.9 190.5 L1263.7 204.3 L1266.0 197.6 L1268.4 184.1 L1270.3 194.4 L1272.2 176.0 L1274.3 188.8 L1276.0 183.1 L1278.1 190.6 L1279.9 188.1 L1281.6 178.8 L1283.9 176.8 L1286.3 171.9 L1288.6 185.0 L1291.0 175.1 L1292.8 181.5 L1295.1 179.6 L1297.4 180.7 L1299.1 191.4 L1301.3 179.9 L1303.5 176.9 L1305.6 182.3 L1307.4 191.9 L1309.6 190.6 L1312.1 186.6 L1314.4 183.5 L1316.2 180.0 L1318.4 200.3 L1320.3 181.5 L1322.4 187.8 L1324.2 176.2 L1325.9 187.1 L1328.4 193.0 L1330.2 184.7 L1332.4 178.7 L1334.8 181.2 L1337.2 195.5 L1339.2 189.3 L1341.2 196.4 L1343.6 190.9 L1345.9 184.9 L1348.4 181.5 L1350.4 191.6 L1352.3 174.4 L1354.2 186.9 L1356.6 178.1 L1359.1 184.8 L1361.4 184.5 L1363.6 175.1 L1365.7 186.4 L1367.9 179.1 L1370.1 184.8 L1371.9 182.1 L1374.3 169.0 L1376.2 182.7 L1378.1 184.4 L1380.5 182.0 L1382.5 192.5 L1384.4 181.9 L1386.8 188.2 L1388.7 175.0 L1391.1 199.5 L1393.3 186.8 L1395.4 174.7 L1397.7 190.1 L1399.9 179.1 L1402.1 185.5 L1403.9 181.1 L1406.3 194.7 L1408.5 183.9 L1410.3 191.7 L1412.4 198.8 L1414.5 178.3 L1416.4 191.4 L1418.7 186.2 L1420.7 190.4 L1423.1 188.5 L1425.4 190.8 L1427.7 176.3 L1430.0 190.9 L1432.3 186.5 L1434.2 184.0 L1436.7 187.4 L1438.5 196.5 L1440.5 173.9 L1443.0 184.8 L1445.4 178.5 L1447.4 186.0 L1449.1 174.0 L1451.6 187.7 L1453.9 190.5 L1455.9 174.9 L1457.9 185.0 L1460.2 199.6 L1462.0 177.6 L1464.0 188.0 L1466.2 187.5 L1467.9 176.1 L1470.1 186.7 L1472.5 172.8 L1474.4 175.4 L1476.8 178.4 L1479.1 188.1 L1481.4 193.8 L1483.7 194.6 L1485.7 174.8 L1488.2 192.6 L1490.4 184.8 L1492.5 180.6 L1494.7 194.7 L1496.6 183.2 L1498.5 193.2 L1500.9 190.9 L1503.0 194.2 L1505.3 187.9 L1507.6 185.3 L1509.6 176.2 L1512.0 187.4 L1514.1 175.9 L1516.3 179.6 L1518.3 186.6 L1520.5 193.9 L1522.4 185.9 L1524.8 189.1 L1526.6 182.3 L1528.4 179.8 L1530.3 189.0 L1532.3 183.0 L1534.8 177.9 L1536.5 173.8 L1538.9 185.8 L1540.6 182.0 L1543.0 183.9 L1544.8 184.9 L1547.3 173.5 L1549.1 186.7 L1551.6 171.9 L1554.0 178.5 L1555.8 183.1 L1558.2 189.2 L1560.2 192.2 L1562.5 183.4 L1564.7 177.8 L1566.8 184.0 L1568.8 188.2 L1570.8 193.3 L1573.0 181.0 L1575.1 192.4 L1576.9 192.7 L1579.0 192.5 L1580.8 190.2 L1582.9 189.0 L1584.7 178.2 L1586.5 177.5 L1589.0 180.2 L1590.7 189.2 L1592.6 178.5 L1594.7 177.1 L1596.6 196.1 L1598.4 177.6 L1600.8 192.5 L1603.0 185.0 L1605.2 193.4 L1607.4 189.0 L1609.3 187.2 L1611.3 191.0 L1613.1 181.1 L1615.3 181.8 L1617.0 181.7 L1619.1 175.9 L1620.9 194.1 L1622.7 187.3 L1624.9 182.8 L1626.7 176.9 L1628.5 176.1 L1630.6 193.9 L1632.8 181.1 L1635.2 180.0 L1637.6 184.6 L1639.4 183.5 L1641.5 187.9 L1643.6 179.7 L1645.5 192.3 L1647.8 184.5 L1650.2 177.6 L1652.1 192.5 L1653.8 182.0 L1656.1 188.0 L1658.1 187.7 L1660.6 190.8 L1662.3 180.1 L1664.6 187.2 L1666.5 180.9 L1668.8 170.5 L1671.2 183.1 L1673.3 189.0 L1675.5 195.8 L1677.3 171.9 L1679.1 176.8 L1681.4 183.1 L1683.5 177.1 L1685.3 174.0 L1687.7 195.5 L1690.1 174.5 L1692.5 190.2 L1694.8 189.4 L1696.8 186.7 L1698.8 186.1 L1700.9 190.8 L1703.0 178.1 L1705.2 177.5 L1707.6 198.3 L1709.5 194.5 L1711.5 182.9 L1713.6 194.8 L1715.6 192.4 L1717.7 192.9 L1719.9 177.2 L1721.0 186.7 L1723.0 202.3 L1725.0 205.7 L1727.0 210.8 L1728.8 207.6 L1730.4 208.7 L1732.4 213.4 L1734.5 213.6 L1736.5 213.3 L1738.2 209.8 L1740.6 212.8 L1742.5 207.8 L1745.0 208.3 L1747.0 204.4 L1748.7 205.5 L1750.6 212.6 L1752.3 210.9 L1754.7 212.2 L1756.9 207.7 L1758.8 208.6 L1760.5 213.4 L1762.3 207.3 L1764.3 210.9 L1766.5 209.5 L1768.4 206.2 L1770.7 211.6 L1772.9 208.8 L1775.4 206.8 L1777.3 204.3 L1779.0 209.9 L1781.3 212.5 L1783.4 213.6 L1785.7 206.5 L1786.8 222.5 L1787.9 205.4 L1789.0 211.3 L1789.8 207.1 L1792.0 208.3 L1792.0 209.1 L1794.0 204.6 L1795.5 180.0 L1798.0 171.0 L1801.0 165.4 L1804.5 157.6 L1806.5 163.2 L1808.8 162.1 L1811.0 175.5 L1814.5 190.3 L1816.5 175.5 L1818.8 168.8 L1821.0 166.6 L1823.0 161.0 L1825.0 158.3 L1827.0 166.6" fill="none" stroke="#e8e8e8" stroke-width="1.4" stroke-linejoin="round"/><rect x="1402.6" y="41.25" width="1" height="221.95" fill="#d8d838"/><rect x="978.75" y="41.25" width="848.3499999999999" height="221.95" fill="none" stroke="#9a9a9a" stroke-width="2"/></svg>
<span class="t" style="left:924.00px;top:31px;font-size:20.5px;color:#ffffff;">40.0</span>
<span class="t" style="left:924.00px;top:76px;font-size:20.5px;color:#ffffff;">20.0</span>
<span class="t" style="left:935.40px;top:121px;font-size:20.5px;color:#ffffff;">0.0</span>
<span class="t" style="left:917.18px;top:165px;font-size:20.5px;color:#ffffff;">-20.0</span>
<span class="t" style="left:917.18px;top:210px;font-size:20.5px;color:#ffffff;">-40.0</span>
<span class="t" style="left:917.18px;top:255px;font-size:20.5px;color:#ffffff;">-60.0</span>
<span class="t" style="left:1001.10px;top:271px;font-size:20.5px;color:#ffffff;">216</span>
<span class="t" style="left:1075.47px;top:271px;font-size:20.5px;color:#ffffff;">216.2</span>
<span class="t" style="left:1158.39px;top:271px;font-size:20.5px;color:#ffffff;">216.4</span>
<span class="t" style="left:1241.31px;top:271px;font-size:20.5px;color:#ffffff;">216.6</span>
<span class="t" style="left:1324.23px;top:271px;font-size:20.5px;color:#ffffff;">216.8</span>
<span class="t" style="left:1415.70px;top:271px;font-size:20.5px;color:#ffffff;">217</span>
<span class="t" style="left:1490.07px;top:271px;font-size:20.5px;color:#ffffff;">217.2</span>
<span class="t" style="left:1572.99px;top:271px;font-size:20.5px;color:#ffffff;">217.4</span>
<span class="t" style="left:1655.91px;top:271px;font-size:20.5px;color:#ffffff;">217.6</span>
<span class="t" style="left:1738.83px;top:271px;font-size:20.5px;color:#ffffff;">217.8</span>
<span class="t" style="left:1310.50px;top:301px;font-size:22px;color:#ffffff;letter-spacing:1.047px;">Frequency (MHz)</span>
<span class="t" style="left:882.60px;top:231.40px;font-size:22px;color:#ffffff;transform-origin:0 0;transform:rotate(-90deg) translate(-1.00px,-18.63px);letter-spacing:0.701px;">Magnitude (dB)</span>
<svg style="left:1350px;top:455px" width="510" height="375" viewBox="1350 455 510 375"><rect x="1404.25" y="465.0" width="39.5" height="354.20000000000005" fill="#404040"/><rect x="1381.63" y="465.0" width="1" height="354.20000000000005" fill="#8f8f8f"/><rect x="1414.02" y="465.0" width="1" height="354.20000000000005" fill="#8f8f8f"/><rect x="1446.41" y="465.0" width="1" height="354.20000000000005" fill="#8f8f8f"/><rect x="1478.80" y="465.0" width="1" height="354.20000000000005" fill="#8f8f8f"/><rect x="1511.19" y="465.0" width="1" height="354.20000000000005" fill="#8f8f8f"/><rect x="1543.58" y="465.0" width="1" height="354.20000000000005" fill="#8f8f8f"/><rect x="1575.97" y="465.0" width="1" height="354.20000000000005" fill="#8f8f8f"/><rect x="1608.36" y="465.0" width="1" height="354.20000000000005" fill="#8f8f8f"/><rect x="1640.75" y="465.0" width="1" height="354.20000000000005" fill="#8f8f8f"/><rect x="1673.14" y="465.0" width="1" height="354.20000000000005" fill="#8f8f8f"/><rect x="1705.53" y="465.0" width="1" height="354.20000000000005" fill="#8f8f8f"/><rect x="1737.92" y="465.0" width="1" height="354.20000000000005" fill="#8f8f8f"/><rect x="1770.31" y="465.0" width="1" height="354.20000000000005" fill="#8f8f8f"/><rect x="1802.70" y="465.0" width="1" height="354.20000000000005" fill="#8f8f8f"/><rect x="1835.09" y="465.0" width="1" height="354.20000000000005" fill="#8f8f8f"/><rect x="1358.75" y="535.50" width="484.54999999999995" height="1" fill="#8f8f8f"/><rect x="1358.75" y="606.50" width="484.54999999999995" height="1" fill="#8f8f8f"/><rect x="1358.75" y="677.50" width="484.54999999999995" height="1" fill="#8f8f8f"/><rect x="1358.75" y="748.50" width="484.54999999999995" height="1" fill="#8f8f8f"/><line x1="1443.8" y1="465.0" x2="1443.8" y2="820.2" stroke="#ffff3c" stroke-width="1" stroke-dasharray="1 1.1"/><path d="M1359.75 792.0 L1360.02 796.4 L1360.29 779.5 L1360.56 807.2 L1360.83 777.9 L1361.10 777.0 L1361.37 813.7 L1361.64 788.4 L1361.91 777.7 L1362.18 788.6 L1362.45 799.3 L1362.72 814.8 L1362.99 791.6 L1363.26 807.2 L1363.53 785.4 L1363.80 774.8 L1364.07 786.3 L1364.34 801.6 L1364.61 787.3 L1364.88 806.1 L1365.15 753.3 L1365.42 784.3 L1365.69 778.5 L1365.96 800.4 L1366.23 803.2 L1366.50 779.3 L1366.77 744.5 L1367.04 758.7 L1367.31 775.7 L1367.58 760.3 L1367.85 761.8 L1368.12 787.1 L1368.39 802.4 L1368.66 782.5 L1368.93 797.2 L1369.20 789.2 L1369.47 810.9 L1369.74 819.2 L1370.01 806.0 L1370.28 791.2 L1370.55 797.1 L1370.82 760.0 L1371.09 783.8 L1371.36 788.1 L1371.63 812.6 L1371.90 781.2 L1372.17 790.3 L1372.44 776.9 L1372.71 767.9 L1372.98 819.2 L1373.25 764.7 L1373.52 819.2 L1373.79 799.5 L1374.06 801.6 L1374.33 819.2 L1374.60 819.2 L1374.87 781.0 L1375.14 815.4 L1375.41 817.6 L1375.68 784.7 L1375.95 785.6 L1376.22 816.2 L1376.49 819.2 L1376.76 802.3 L1377.03 788.5 L1377.30 764.7 L1377.57 819.2 L1377.84 793.9 L1378.11 784.0 L1378.38 812.9 L1378.65 773.3 L1378.92 786.6 L1379.19 811.3 L1379.46 790.0 L1379.73 819.2 L1380.00 800.0 L1380.27 792.5 L1380.54 786.0 L1380.81 768.3 L1381.08 798.9 L1381.35 804.2 L1381.62 808.4 L1381.89 798.9 L1382.16 790.7 L1382.43 791.3 L1382.70 789.9 L1382.97 819.2 L1383.24 775.9 L1383.51 792.2 L1383.78 779.9 L1384.05 815.4 L1384.32 812.8 L1384.59 798.2 L1384.86 803.8 L1385.13 819.2 L1385.40 817.0 L1385.67 805.8 L1385.94 769.3 L1386.21 819.2 L1386.48 819.2 L1386.75 805.9 L1387.02 814.4 L1387.29 783.3 L1387.56 786.5 L1387.83 777.2 L1388.10 764.5 L1388.37 773.5 L1388.64 814.0 L1388.91 793.4 L1389.18 773.0 L1389.45 819.2 L1389.72 814.0 L1389.99 773.1 L1390.26 761.5 L1390.53 802.5 L1390.80 805.8 L1391.07 787.0 L1391.34 779.0 L1391.61 799.7 L1391.88 807.5 L1392.15 807.8 L1392.42 785.1 L1392.69 809.4 L1392.96 772.2 L1393.23 755.7 L1393.50 765.7 L1393.77 775.3 L1394.04 805.1 L1394.31 783.5 L1394.58 790.7 L1394.85 800.7 L1395.12 819.2 L1395.39 818.9 L1395.66 767.8 L1395.93 805.7 L1396.20 801.3 L1396.47 801.0 L1396.74 809.1 L1397.01 810.8 L1397.28 779.5 L1397.55 790.4 L1397.82 813.4 L1398.09 792.9 L1398.36 803.7 L1398.63 789.4 L1398.90 797.7 L1399.17 783.6 L1399.44 793.2 L1399.71 769.3 L1399.98 803.5 L1400.25 791.9 L1400.52 785.1 L1400.79 768.8 L1401.06 782.3 L1401.33 790.3 L1401.60 816.9 L1401.87 805.2 L1402.14 799.0 L1402.41 757.2 L1402.68 819.2 L1402.95 816.7 L1403.22 819.2 L1403.49 800.9 L1403.76 793.9 L1404.03 816.2 L1404.30 803.0 L1404.57 815.5 L1404.84 751.6 L1405.11 819.2 L1405.38 795.6 L1405.65 780.5 L1405.92 781.4 L1406.19 758.1 L1406.46 805.6 L1406.73 800.7 L1407.00 785.8 L1407.27 780.9 L1407.54 792.3 L1407.81 799.1 L1408.08 786.5 L1408.35 787.0 L1408.62 805.3 L1408.89 796.5 L1409.16 795.3 L1409.43 776.2 L1409.70 778.1 L1409.97 773.6 L1410.24 790.2 L1410.51 808.1 L1410.78 796.6 L1411.05 812.3 L1411.32 803.8 L1411.59 809.0 L1411.86 819.2 L1412.13 818.0 L1412.40 819.2 L1412.67 819.2 L1412.94 819.2 L1413.21 797.7 L1413.48 819.2 L1413.75 819.2 L1414.02 809.1 L1414.29 801.0 L1414.56 793.0 L1414.83 806.6 L1415.10 819.2 L1415.37 791.0 L1415.64 781.8 L1415.91 801.2 L1416.18 819.2 L1416.45 801.1 L1416.72 789.0 L1416.99 788.2 L1417.26 815.4 L1417.53 780.4 L1417.80 787.5 L1418.07 814.1 L1418.34 792.4 L1418.61 789.0 L1418.88 811.4 L1419.15 776.0 L1419.42 777.2 L1419.69 814.0 L1419.96 783.5 L1420.23 780.1 L1420.50 804.4 L1420.77 784.0 L1421.04 790.2 L1421.31 819.2 L1421.58 802.8 L1421.85 785.6 L1422.12 806.0 L1422.39 819.2 L1422.66 813.7 L1422.93 786.0 L1423.20 784.8 L1423.47 819.2 L1423.74 766.4 L1424.01 815.4 L1424.28 799.5 L1424.55 804.2 L1424.82 805.2 L1425.09 819.2 L1425.36 819.2 L1425.63 814.4 L1425.90 814.6 L1426.17 770.2 L1426.44 787.5 L1426.71 790.0 L1426.98 789.6 L1427.25 819.2 L1427.52 787.6 L1427.79 797.7 L1428.06 782.7 L1428.33 819.2 L1428.60 781.0 L1428.87 810.8 L1429.14 813.3 L1429.41 817.5 L1429.68 809.7 L1429.95 790.2 L1430.22 812.7 L1430.49 798.6 L1430.76 788.5 L1431.03 776.4 L1431.30 807.5 L1431.57 788.3 L1431.84 806.3 L1432.11 780.6 L1432.38 803.7 L1432.65 819.2 L1432.92 771.2 L1433.19 799.6 L1433.46 819.2 L1433.73 819.2 L1434.00 781.5 L1434.27 808.3 L1434.54 814.8 L1434.81 791.8 L1435.08 816.3 L1435.35 786.1 L1435.62 800.9 L1435.89 790.7 L1436.16 768.5 L1436.43 782.7 L1436.70 761.9 L1436.97 772.9 L1437.24 775.0 L1437.51 778.9 L1437.78 754.9 L1438.05 810.8 L1438.32 788.1 L1438.59 819.2 L1438.86 778.2 L1439.13 790.0 L1439.40 782.4 L1439.67 803.2 L1439.94 819.2 L1440.21 786.6 L1440.48 793.6 L1440.75 795.7 L1441.02 795.0 L1441.29 772.2 L1441.56 781.1 L1441.83 817.8 L1442.10 819.2 L1442.37 779.0 L1442.64 819.2 L1442.91 819.2 L1443.18 804.5 L1443.45 787.6 L1443.72 810.8 L1443.99 781.0 L1444.26 797.3 L1444.53 804.6 L1444.80 758.2 L1445.07 819.2 L1445.34 810.0 L1445.61 772.2 L1445.88 773.9 L1446.15 791.9 L1446.42 801.7 L1446.69 819.2 L1446.96 800.1 L1447.23 795.9 L1447.50 803.7 L1447.77 775.1 L1448.04 803.1 L1448.31 759.0 L1448.58 794.3 L1448.85 819.2 L1449.12 799.9 L1449.39 818.2 L1449.66 819.2 L1449.93 811.1 L1450.20 801.8 L1450.47 819.2 L1450.74 819.0 L1451.01 797.8 L1451.28 803.7 L1451.55 819.2 L1451.82 786.4 L1452.09 782.3 L1452.36 819.2 L1452.63 812.5 L1452.90 819.2 L1453.17 812.1 L1453.44 802.6 L1453.71 786.9 L1453.98 819.2 L1454.25 781.3 L1454.52 788.4 L1454.79 800.3 L1455.06 799.6 L1455.33 816.0 L1455.60 811.2 L1455.87 761.1 L1456.14 769.0 L1456.41 797.7 L1456.68 810.0 L1456.95 813.5 L1457.22 819.2 L1457.49 786.8 L1457.76 805.5 L1458.03 766.5 L1458.30 776.4 L1458.57 804.3 L1458.84 806.6 L1459.11 801.4 L1459.38 789.3 L1459.65 787.9 L1459.92 761.8 L1460.19 765.7 L1460.46 773.5 L1460.73 819.2 L1461.00 788.0 L1461.27 802.7 L1461.54 805.4 L1461.81 819.2 L1462.08 803.2 L1462.35 812.2 L1462.62 816.2 L1462.89 784.6 L1463.16 819.2 L1463.43 803.0 L1463.70 803.8 L1463.97 819.2 L1464.24 772.0 L1464.51 796.3 L1464.78 810.2 L1465.05 814.8 L1465.32 794.0 L1465.59 797.8 L1465.86 805.5 L1466.13 781.4 L1466.40 788.4 L1466.67 819.2 L1466.94 789.6 L1467.21 799.1 L1467.48 819.2 L1467.75 792.2 L1468.02 761.4 L1468.29 791.5 L1468.56 798.1 L1468.83 819.2 L1469.10 776.1 L1469.37 793.5 L1469.64 761.7 L1469.91 798.8 L1470.18 795.1 L1470.45 817.6 L1470.72 796.5 L1470.99 781.1 L1471.26 793.6 L1471.53 791.3 L1471.80 800.0 L1472.07 800.9 L1472.34 781.5 L1472.61 761.4 L1472.88 755.1 L1473.15 762.0 L1473.42 763.3 L1473.69 778.4 L1473.96 757.6 L1474.23 766.1 L1474.50 766.0 L1474.77 755.9 L1475.04 761.6 L1475.31 788.1 L1475.58 781.4 L1475.85 791.1 L1476.12 756.3 L1476.39 753.8 L1476.66 744.2 L1476.93 746.7 L1477.20 777.1 L1477.47 731.6 L1477.74 757.8 L1478.01 761.3 L1478.28 711.4 L1478.55 776.5 L1478.82 679.1 L1479.09 788.2 L1479.36 626.0 L1479.50 604.2 L1479.63 607.9 L1479.90 653.4 L1480.17 748.3 L1480.44 692.6 L1480.71 767.0 L1480.98 719.8 L1481.25 762.2 L1481.52 727.9 L1481.79 731.2 L1482.06 739.3 L1482.33 747.5 L1482.60 756.0 L1482.87 788.5 L1483.14 780.1 L1483.41 758.9 L1483.68 793.5 L1483.95 759.9 L1484.22 762.8 L1484.49 760.4 L1484.76 765.0 L1485.03 754.3 L1485.30 761.1 L1485.57 756.1 L1485.84 752.7 L1486.11 758.4 L1486.38 752.4 L1486.65 747.7 L1486.92 709.0 L1487.19 689.1 L1487.46 656.7 L1487.50 649.6 L1487.73 758.5 L1488.00 774.8 L1488.27 725.6 L1488.54 741.1 L1488.81 763.7 L1489.08 802.5 L1489.35 763.6 L1489.62 764.8 L1489.89 752.8 L1490.16 805.7 L1490.43 765.1 L1490.70 762.5 L1490.97 768.5 L1491.24 801.3 L1491.51 784.6 L1491.78 814.4 L1492.05 819.2 L1492.32 811.5 L1492.59 771.6 L1492.86 819.2 L1493.13 804.7 L1493.40 813.9 L1493.67 809.2 L1493.94 819.2 L1494.21 819.2 L1494.48 809.6 L1494.75 819.2 L1495.02 771.3 L1495.29 778.8 L1495.56 780.1 L1495.83 792.3 L1496.10 802.2 L1496.37 819.2 L1496.64 794.2 L1496.91 776.4 L1497.18 809.9 L1497.45 776.7 L1497.72 771.6 L1497.99 806.3 L1498.26 819.2 L1498.53 787.5 L1498.80 780.4 L1499.07 748.3 L1499.34 819.2 L1499.61 789.1 L1499.88 778.4 L1500.15 805.3 L1500.42 800.4 L1500.69 804.8 L1500.96 766.8 L1501.23 803.8 L1501.50 806.0 L1501.77 805.3 L1502.04 809.5 L1502.31 815.0 L1502.58 780.7 L1502.85 795.0 L1503.12 784.0 L1503.39 804.9 L1503.66 819.2 L1503.93 802.1 L1504.20 799.4 L1504.47 801.1 L1504.74 790.2 L1505.01 778.1 L1505.28 809.3 L1505.55 807.6 L1505.82 783.8 L1506.09 812.0 L1506.36 811.3 L1506.63 760.5 L1506.90 800.1 L1507.17 797.9 L1507.44 731.9 L1507.71 777.9 L1507.98 786.8 L1508.25 815.8 L1508.52 779.8 L1508.79 781.3 L1509.06 781.9 L1509.33 813.1 L1509.60 782.8 L1509.87 753.1 L1510.14 740.6 L1510.41 819.2 L1510.68 793.9 L1510.95 782.3 L1511.22 778.4 L1511.49 793.5 L1511.76 785.2 L1512.03 816.0 L1512.30 769.1 L1512.57 773.1 L1512.84 819.2 L1513.11 800.7 L1513.38 785.6 L1513.65 775.3 L1513.92 813.6 L1514.19 790.2 L1514.46 781.6 L1514.73 779.3 L1515.00 816.6 L1515.27 818.1 L1515.54 811.4 L1515.81 798.8 L1516.08 813.1 L1516.35 801.3 L1516.62 774.6 L1516.89 805.3 L1517.16 805.2 L1517.43 789.2 L1517.70 771.2 L1517.97 765.7 L1518.24 807.3 L1518.51 754.8 L1518.78 758.2 L1519.05 795.9 L1519.32 758.3 L1519.59 756.1 L1519.86 761.1 L1520.13 759.4 L1520.40 757.8 L1520.67 770.4 L1520.94 759.3 L1521.21 747.5 L1521.48 752.8 L1521.75 777.7 L1522.02 744.5 L1522.29 736.4 L1522.56 724.0 L1522.83 712.6 L1523.10 746.8 L1523.37 670.5 L1523.64 652.1 L1523.75 639.0 L1523.91 646.6 L1524.18 729.3 L1524.45 807.9 L1524.72 720.3 L1524.99 762.5 L1525.26 803.0 L1525.53 750.9 L1525.80 743.2 L1526.07 755.7 L1526.34 804.8 L1526.61 758.2 L1526.88 751.8 L1527.15 781.8 L1527.42 763.8 L1527.69 817.8 L1527.96 809.1 L1528.23 767.4 L1528.50 763.9 L1528.77 749.7 L1529.04 764.8 L1529.31 779.8 L1529.58 770.5 L1529.85 771.2 L1530.12 808.8 L1530.39 805.5 L1530.66 789.2 L1530.93 808.1 L1531.20 814.4 L1531.47 818.3 L1531.74 803.9 L1532.01 810.0 L1532.28 748.1 L1532.55 745.5 L1532.82 819.2 L1533.09 819.2 L1533.36 819.2 L1533.63 773.7 L1533.90 794.4 L1534.17 807.2 L1534.44 787.2 L1534.71 790.4 L1534.98 819.2 L1535.25 775.3 L1535.52 819.2 L1535.79 815.4 L1536.06 798.9 L1536.33 807.8 L1536.60 811.0 L1536.87 803.7 L1537.14 791.0 L1537.41 805.3 L1537.68 813.1 L1537.95 773.5 L1538.22 795.3 L1538.49 808.9 L1538.76 777.3 L1539.03 787.8 L1539.30 794.6 L1539.57 819.2 L1539.84 801.0 L1540.11 807.1 L1540.38 793.4 L1540.65 758.4 L1540.92 791.4 L1541.19 789.4 L1541.46 817.5 L1541.73 785.0 L1542.00 793.6 L1542.27 792.0 L1542.54 786.5 L1542.81 784.5 L1543.08 819.2 L1543.35 792.7 L1543.62 785.8 L1543.89 779.4 L1544.16 811.3 L1544.43 784.0 L1544.70 819.2 L1544.97 788.0 L1545.24 768.2 L1545.51 788.0 L1545.78 783.6 L1546.05 792.5 L1546.32 795.5 L1546.59 786.6 L1546.86 814.0 L1547.13 805.0 L1547.40 812.8 L1547.67 813.2 L1547.94 792.1 L1548.21 783.9 L1548.48 778.0 L1548.75 795.8 L1549.02 770.7 L1549.29 768.3 L1549.56 810.2 L1549.83 788.1 L1550.10 794.9 L1550.37 797.6 L1550.64 816.4 L1550.91 794.1 L1551.18 784.5 L1551.45 786.5 L1551.72 812.1 L1551.99 772.8 L1552.26 803.0 L1552.53 797.3 L1552.80 773.1 L1553.07 769.2 L1553.34 803.3 L1553.61 783.8 L1553.88 772.4 L1554.15 809.2 L1554.42 752.3 L1554.69 766.5 L1554.96 753.8 L1555.23 780.7 L1555.50 763.7 L1555.77 791.2 L1556.04 787.6 L1556.31 819.2 L1556.58 815.6 L1556.85 786.4 L1557.12 793.4 L1557.39 801.7 L1557.66 798.3 L1557.93 812.5 L1558.20 763.3 L1558.47 776.9 L1558.74 799.4 L1559.01 819.2 L1559.28 788.2 L1559.55 804.8 L1559.82 817.2 L1560.09 799.8 L1560.36 819.2 L1560.63 819.2 L1560.90 819.2 L1561.17 819.2 L1561.44 819.2 L1561.71 789.1 L1561.98 778.5 L1562.25 800.2 L1562.52 815.1 L1562.79 803.6 L1563.06 819.2 L1563.33 812.6 L1563.60 766.5 L1563.87 791.0 L1564.14 811.8 L1564.41 819.2 L1564.68 819.2 L1564.95 777.1 L1565.22 771.5 L1565.49 818.1 L1565.76 765.6 L1566.03 814.7 L1566.30 790.1 L1566.57 785.4 L1566.84 819.2 L1567.11 791.2 L1567.38 814.7 L1567.65 809.9 L1567.92 807.3 L1568.19 819.2 L1568.46 819.2 L1568.73 786.2 L1569.00 793.7 L1569.27 769.2 L1569.54 819.2 L1569.81 791.8 L1570.08 793.7 L1570.35 793.2 L1570.62 793.0 L1570.89 781.0 L1571.16 819.2 L1571.43 811.9 L1571.70 789.1 L1571.97 795.4 L1572.24 819.2 L1572.51 790.9 L1572.78 781.9 L1573.05 817.8 L1573.32 819.2 L1573.59 808.0 L1573.86 780.7 L1574.13 819.2 L1574.40 778.9 L1574.67 782.1 L1574.94 808.0 L1575.21 801.4 L1575.48 779.1 L1575.75 787.0 L1576.02 782.3 L1576.29 790.1 L1576.56 796.3 L1576.83 798.5 L1577.10 789.3 L1577.37 803.6 L1577.64 795.8 L1577.91 819.2 L1578.18 819.2 L1578.45 795.5 L1578.72 780.4 L1578.99 819.2 L1579.26 800.7 L1579.53 800.3 L1579.80 788.9 L1580.07 795.1 L1580.34 797.9 L1580.61 819.2 L1580.88 780.6 L1581.15 819.2 L1581.42 795.9 L1581.69 791.9 L1581.96 802.4 L1582.23 804.3 L1582.50 804.8 L1582.77 795.0 L1583.04 806.8 L1583.31 783.8 L1583.58 812.1 L1583.85 813.0 L1584.12 814.9 L1584.39 816.7 L1584.66 819.2 L1584.93 796.2 L1585.20 764.1 L1585.47 798.3 L1585.74 780.1 L1586.01 797.9 L1586.28 819.2 L1586.55 770.1 L1586.82 801.1 L1587.09 812.2 L1587.36 819.2 L1587.63 794.1 L1587.90 817.4 L1588.17 819.2 L1588.44 795.2 L1588.71 790.2 L1588.98 803.5 L1589.25 814.8 L1589.52 801.4 L1589.79 806.2 L1590.06 798.8 L1590.33 809.5 L1590.60 804.1 L1590.87 797.1 L1591.14 795.1 L1591.41 788.2 L1591.68 782.9 L1591.95 793.3 L1592.22 819.2 L1592.49 819.2 L1592.76 803.3 L1593.03 819.2 L1593.30 806.3 L1593.57 783.5 L1593.84 802.8 L1594.11 763.2 L1594.38 813.1 L1594.65 769.6 L1594.92 763.5 L1595.19 801.5 L1595.46 819.2 L1595.73 814.0 L1596.00 805.2 L1596.27 794.7 L1596.54 782.9 L1596.81 780.2 L1597.08 794.9 L1597.35 795.3 L1597.62 796.5 L1597.89 806.1 L1598.16 785.2 L1598.43 792.7 L1598.70 797.6 L1598.97 806.7 L1599.24 817.7 L1599.51 819.2 L1599.78 806.3 L1600.05 765.3 L1600.32 814.3 L1600.59 790.4 L1600.86 804.3 L1601.13 796.8 L1601.40 809.4 L1601.67 810.7 L1601.94 819.2 L1602.21 759.8 L1602.48 783.5 L1602.75 758.6 L1603.02 745.0 L1603.29 819.2 L1603.56 819.2 L1603.83 802.6 L1604.10 807.0 L1604.37 794.5 L1604.64 784.9 L1604.91 803.3 L1605.18 792.7 L1605.45 779.0 L1605.72 806.4 L1605.99 764.4 L1606.26 819.2 L1606.53 772.9 L1606.80 804.7 L1607.07 818.5 L1607.34 781.1 L1607.61 804.6 L1607.88 807.3 L1608.15 819.2 L1608.42 790.0 L1608.69 819.2 L1608.96 819.2 L1609.23 762.0 L1609.50 784.9 L1609.77 805.0 L1610.04 788.2 L1610.31 811.7 L1610.58 819.2 L1610.85 819.2 L1611.12 801.3 L1611.39 786.5 L1611.66 819.2 L1611.93 797.9 L1612.20 819.2 L1612.47 815.7 L1612.74 801.2 L1613.01 819.2 L1613.28 819.2 L1613.55 806.3 L1613.82 793.3 L1614.09 819.2 L1614.36 805.1 L1614.63 797.4 L1614.90 807.4 L1615.17 773.7 L1615.44 805.3 L1615.71 805.2 L1615.98 805.8 L1616.25 795.3 L1616.52 819.2 L1616.79 796.2 L1617.06 812.4 L1617.33 789.9 L1617.60 754.0 L1617.87 809.1 L1618.14 792.0 L1618.41 779.5 L1618.68 783.3 L1618.95 798.6 L1619.22 792.1 L1619.49 805.0 L1619.76 792.2 L1620.03 787.6 L1620.30 811.3 L1620.57 773.0 L1620.84 805.5 L1621.11 797.5 L1621.38 784.5 L1621.65 816.3 L1621.92 811.3 L1622.19 783.2 L1622.46 794.4 L1622.73 805.7 L1623.00 790.6 L1623.27 813.5 L1623.54 819.2 L1623.81 808.7 L1624.08 791.2 L1624.35 799.7 L1624.62 807.4 L1624.89 819.2 L1625.16 797.8 L1625.43 772.9 L1625.70 815.3 L1625.97 817.9 L1626.24 819.2 L1626.51 806.0 L1626.78 778.0 L1627.05 780.6 L1627.32 771.1 L1627.59 765.6 L1627.86 819.2 L1628.13 783.6 L1628.40 819.2 L1628.67 819.2 L1628.94 787.5 L1629.21 770.7 L1629.48 810.5 L1629.75 796.9 L1630.02 746.9 L1630.29 759.7 L1630.56 793.2 L1630.83 796.4 L1631.10 783.5 L1631.37 791.9 L1631.64 782.1 L1631.91 733.2 L1632.18 796.2 L1632.45 776.7 L1632.72 771.0 L1632.99 785.8 L1633.26 760.5 L1633.53 784.1 L1633.80 812.4 L1634.07 816.3 L1634.34 810.5 L1634.61 798.9 L1634.88 793.4 L1635.15 799.3 L1635.42 819.2 L1635.69 778.0 L1635.96 797.5 L1636.23 783.4 L1636.50 792.4 L1636.77 791.3 L1637.04 781.5 L1637.31 788.0 L1637.58 811.7 L1637.85 790.8 L1638.12 774.4 L1638.39 787.2 L1638.66 787.9 L1638.93 801.0 L1639.20 797.9 L1639.47 779.6 L1639.74 799.6 L1640.01 771.3 L1640.28 783.2 L1640.55 802.2 L1640.82 775.9 L1641.09 812.8 L1641.36 764.8 L1641.63 810.3 L1641.90 777.9 L1642.17 789.0 L1642.44 754.7 L1642.71 800.5 L1642.98 786.5 L1643.25 811.7 L1643.52 782.8 L1643.79 800.2 L1644.06 819.2 L1644.33 784.0 L1644.60 802.3 L1644.87 800.0 L1645.14 819.2 L1645.41 810.1 L1645.68 819.2 L1645.95 798.5 L1646.22 803.9 L1646.49 805.0 L1646.76 803.2 L1647.03 807.4 L1647.30 806.8 L1647.57 792.3 L1647.84 805.1 L1648.11 807.3 L1648.38 818.7 L1648.65 758.3 L1648.92 794.9 L1649.19 811.0 L1649.46 769.0 L1649.73 790.0 L1650.00 781.3 L1650.27 785.2 L1650.54 759.9 L1650.81 799.6 L1651.08 795.1 L1651.35 819.2 L1651.62 806.7 L1651.89 797.4 L1652.16 758.9 L1652.43 780.2 L1652.70 776.1 L1652.97 798.0 L1653.24 803.6 L1653.51 782.9 L1653.78 817.0 L1654.05 809.2 L1654.32 810.2 L1654.59 801.9 L1654.86 793.9 L1655.13 803.8 L1655.40 819.2 L1655.67 801.9 L1655.94 819.2 L1656.21 812.2 L1656.48 803.3 L1656.75 777.2 L1657.02 785.0 L1657.29 761.8 L1657.56 819.2 L1657.83 808.9 L1658.10 819.2 L1658.37 790.8 L1658.64 819.2 L1658.91 793.0 L1659.18 789.8 L1659.45 810.4 L1659.72 814.9 L1659.99 819.2 L1660.26 791.4 L1660.53 802.6 L1660.80 790.1 L1661.07 817.2 L1661.34 786.8 L1661.61 788.7 L1661.88 819.2 L1662.15 796.5 L1662.42 774.8 L1662.69 796.0 L1662.96 813.7 L1663.23 819.2 L1663.50 810.4 L1663.77 804.8 L1664.04 814.7 L1664.31 755.8 L1664.58 793.1 L1664.85 785.0 L1665.12 766.9 L1665.39 777.1 L1665.66 766.4 L1665.93 794.7 L1666.20 778.0 L1666.47 803.0 L1666.74 804.6 L1667.01 817.9 L1667.28 804.2 L1667.55 818.3 L1667.82 796.3 L1668.09 796.1 L1668.36 792.0 L1668.63 819.2 L1668.90 806.6 L1669.17 798.2 L1669.44 815.6 L1669.71 812.4 L1669.98 791.7 L1670.25 790.9 L1670.52 792.6 L1670.79 794.7 L1671.06 754.3 L1671.33 801.4 L1671.60 790.0 L1671.87 759.6 L1672.14 780.2 L1672.41 817.8 L1672.68 774.7 L1672.95 819.2 L1673.22 785.3 L1673.49 792.7 L1673.76 819.2 L1674.03 799.0 L1674.30 810.9 L1674.57 771.8 L1674.84 785.4 L1675.11 771.9 L1675.38 786.5 L1675.65 772.6 L1675.92 769.3 L1676.19 805.2 L1676.46 789.6 L1676.73 815.9 L1677.00 788.0 L1677.27 801.2 L1677.54 810.7 L1677.81 770.2 L1678.08 797.3 L1678.35 773.2 L1678.62 785.8 L1678.89 768.3 L1679.16 773.3 L1679.43 811.7 L1679.70 785.4 L1679.97 812.5 L1680.24 789.0 L1680.51 806.5 L1680.78 813.2 L1681.05 819.2 L1681.32 812.8 L1681.59 788.3 L1681.86 791.9 L1682.13 815.8 L1682.40 792.1 L1682.67 810.6 L1682.94 819.2 L1683.21 816.0 L1683.48 819.2 L1683.75 789.7 L1684.02 789.3 L1684.29 781.7 L1684.56 819.2 L1684.83 811.7 L1685.10 802.6 L1685.37 819.2 L1685.64 784.2 L1685.91 817.1 L1686.18 783.4 L1686.45 780.5 L1686.72 803.1 L1686.99 773.0 L1687.26 780.6 L1687.53 819.2 L1687.80 819.2 L1688.07 819.2 L1688.34 805.5 L1688.61 819.2 L1688.88 819.2 L1689.15 812.9 L1689.42 803.5 L1689.69 768.9 L1689.96 819.2 L1690.23 791.6 L1690.50 799.8 L1690.77 797.2 L1691.04 786.4 L1691.31 811.1 L1691.58 803.6 L1691.85 789.1 L1692.12 767.3 L1692.39 791.5 L1692.66 819.2 L1692.93 775.8 L1693.20 819.2 L1693.47 772.6 L1693.74 795.0 L1694.01 819.2 L1694.28 807.6 L1694.55 801.9 L1694.82 800.5 L1695.09 808.1 L1695.36 803.8 L1695.63 783.0 L1695.90 819.2 L1696.17 792.9 L1696.44 777.6 L1696.71 806.5 L1696.98 819.2 L1697.25 814.4 L1697.52 788.4 L1697.79 773.7 L1698.06 819.2 L1698.33 812.2 L1698.60 793.8 L1698.87 819.2 L1699.14 813.2 L1699.41 794.8 L1699.68 816.5 L1699.95 805.3 L1700.22 803.8 L1700.49 784.5 L1700.76 819.2 L1701.03 819.2 L1701.30 744.3 L1701.57 777.6 L1701.84 819.2 L1702.11 793.1 L1702.38 819.2 L1702.65 783.4 L1702.92 806.7 L1703.19 810.2 L1703.46 813.2 L1703.73 795.4 L1704.00 790.1 L1704.27 819.2 L1704.54 809.4 L1704.81 785.7 L1705.08 819.2 L1705.35 778.0 L1705.62 791.5 L1705.89 793.9 L1706.16 806.9 L1706.43 770.9 L1706.70 819.2 L1706.97 794.3 L1707.24 791.1 L1707.51 788.5 L1707.78 777.1 L1708.05 777.3 L1708.32 815.8 L1708.59 819.2 L1708.86 809.9 L1709.13 801.9 L1709.40 806.3 L1709.67 796.5 L1709.94 810.1 L1710.21 819.2 L1710.48 777.0 L1710.75 806.1 L1711.02 789.2 L1711.29 780.6 L1711.56 750.0 L1711.83 791.7 L1712.10 792.9 L1712.37 778.8 L1712.64 789.4 L1712.91 785.0 L1713.18 792.9 L1713.45 819.2 L1713.72 811.2 L1713.99 819.2 L1714.26 756.1 L1714.53 795.6 L1714.80 802.2 L1715.07 800.6 L1715.34 813.1 L1715.61 808.5 L1715.88 802.7 L1716.15 818.0 L1716.42 789.7 L1716.69 777.4 L1716.96 806.9 L1717.23 819.2 L1717.50 799.2 L1717.77 819.2 L1718.04 755.8 L1718.31 800.1 L1718.58 784.7 L1718.85 813.8 L1719.12 791.6 L1719.39 814.3 L1719.66 803.6 L1719.93 794.3 L1720.20 818.5 L1720.47 768.1 L1720.74 788.6 L1721.01 819.2 L1721.28 800.8 L1721.55 811.0 L1721.82 819.2 L1722.09 801.7 L1722.36 813.0 L1722.63 774.5 L1722.90 796.7 L1723.17 818.3 L1723.44 785.3 L1723.71 798.3 L1723.98 781.8 L1724.25 805.6 L1724.52 798.2 L1724.79 763.3 L1725.06 793.8 L1725.33 770.8 L1725.60 757.8 L1725.87 802.7 L1726.14 782.7 L1726.41 777.5 L1726.68 779.7 L1726.95 803.3 L1727.22 819.2 L1727.49 797.3 L1727.76 801.5 L1728.03 813.7 L1728.30 811.2 L1728.57 804.2 L1728.84 786.2 L1729.11 790.5 L1729.38 773.0 L1729.65 790.5 L1729.92 785.4 L1730.19 803.4 L1730.46 780.4 L1730.73 818.2 L1731.00 810.5 L1731.27 750.5 L1731.54 764.5 L1731.81 805.3 L1732.08 802.9 L1732.35 777.7 L1732.62 790.7 L1732.89 790.6 L1733.16 798.4 L1733.43 751.4 L1733.70 819.2 L1733.97 801.1 L1734.24 812.7 L1734.51 814.3 L1734.78 816.2 L1735.05 783.7 L1735.32 785.5 L1735.59 817.4 L1735.86 778.5 L1736.13 796.7 L1736.40 800.4 L1736.67 780.6 L1736.94 772.8 L1737.21 811.3 L1737.48 806.8 L1737.75 790.1 L1738.02 819.2 L1738.29 781.6 L1738.56 816.6 L1738.83 797.5 L1739.10 769.3 L1739.37 794.9 L1739.64 819.2 L1739.91 818.9 L1740.18 791.4 L1740.45 789.1 L1740.72 792.5 L1740.99 812.6 L1741.26 815.7 L1741.53 775.0 L1741.80 802.4 L1742.07 776.2 L1742.34 775.5 L1742.61 814.4 L1742.88 774.4 L1743.15 788.9 L1743.42 748.3 L1743.69 763.4 L1743.96 773.1 L1744.23 771.6 L1744.50 813.8 L1744.77 781.9 L1745.04 760.5 L1745.31 819.2 L1745.58 806.0 L1745.85 813.8 L1746.12 807.9 L1746.39 818.0 L1746.66 795.5 L1746.93 803.9 L1747.20 819.2 L1747.47 803.4 L1747.74 799.2 L1748.01 819.2 L1748.28 819.2 L1748.55 802.2 L1748.82 818.7 L1749.09 804.0 L1749.36 797.3 L1749.63 801.1 L1749.90 755.7 L1750.17 813.5 L1750.44 794.5 L1750.71 811.8 L1750.98 794.4 L1751.25 806.8 L1751.52 760.7 L1751.79 819.2 L1752.06 793.4 L1752.33 803.1 L1752.60 815.3 L1752.87 790.8 L1753.14 758.9 L1753.41 771.9 L1753.68 791.4 L1753.95 794.6 L1754.22 812.2 L1754.49 767.8 L1754.76 763.1 L1755.03 813.9 L1755.30 801.4 L1755.57 811.9 L1755.84 775.6 L1756.11 768.7 L1756.38 796.7 L1756.65 784.7 L1756.92 806.0 L1757.19 805.0 L1757.46 780.5 L1757.73 800.3 L1758.00 780.1 L1758.27 774.1 L1758.54 787.3 L1758.81 797.5 L1759.08 777.7 L1759.35 770.9 L1759.62 792.7 L1759.89 814.1 L1760.16 795.4 L1760.43 772.5 L1760.70 761.1 L1760.97 754.1 L1761.24 808.8 L1761.51 797.0 L1761.78 810.0 L1762.05 780.2 L1762.32 816.7 L1762.59 813.4 L1762.86 783.9 L1763.13 794.1 L1763.40 784.2 L1763.67 800.2 L1763.94 814.1 L1764.21 815.4 L1764.48 790.0 L1764.75 819.2 L1765.02 804.7 L1765.29 817.0 L1765.56 813.0 L1765.83 795.5 L1766.10 819.2 L1766.37 819.2 L1766.64 819.2 L1766.91 779.8 L1767.18 804.9 L1767.45 794.0 L1767.72 782.9 L1767.99 774.1 L1768.26 794.0 L1768.53 808.0 L1768.80 781.9 L1769.07 788.4 L1769.34 778.8 L1769.61 798.2 L1769.88 819.2 L1770.15 781.8 L1770.42 787.7 L1770.69 815.9 L1770.96 761.9 L1771.23 799.7 L1771.50 793.8 L1771.77 819.2 L1772.04 795.7 L1772.31 819.2 L1772.58 793.9 L1772.85 791.9 L1773.12 812.3 L1773.39 773.3 L1773.66 819.2 L1773.93 812.2 L1774.20 819.2 L1774.47 791.8 L1774.74 781.0 L1775.01 775.6 L1775.28 791.0 L1775.55 770.0 L1775.82 779.2 L1776.09 804.3 L1776.36 818.5 L1776.63 780.7 L1776.90 788.9 L1777.17 790.6 L1777.44 782.2 L1777.71 818.5 L1777.98 819.2 L1778.25 806.2 L1778.52 799.0 L1778.79 778.6 L1779.06 777.1 L1779.33 781.3 L1779.60 798.6 L1779.87 758.6 L1780.14 784.5 L1780.41 764.9 L1780.68 793.3 L1780.95 773.0 L1781.22 785.9 L1781.49 783.1 L1781.76 759.1 L1782.03 764.2 L1782.30 743.3 L1782.57 789.9 L1782.84 774.9 L1783.11 779.0 L1783.38 748.5 L1783.65 788.1 L1783.92 819.2 L1784.19 819.2 L1784.46 802.2 L1784.73 792.6 L1785.00 783.2 L1785.27 797.0 L1785.54 775.0 L1785.81 777.8 L1786.08 790.1 L1786.35 793.2 L1786.62 769.2 L1786.89 775.8 L1787.16 760.8 L1787.43 791.3 L1787.70 813.8 L1787.97 791.0 L1788.24 819.2 L1788.51 766.5 L1788.78 807.8 L1789.05 802.0 L1789.32 810.7 L1789.59 819.2 L1789.86 819.2 L1790.13 805.5 L1790.40 782.0 L1790.67 816.0 L1790.94 819.2 L1791.21 819.2 L1791.48 819.2 L1791.75 819.2 L1792.02 783.7 L1792.29 819.2 L1792.56 802.3 L1792.83 802.6 L1793.10 819.2 L1793.37 786.9 L1793.64 819.2 L1793.91 806.9 L1794.18 819.2 L1794.45 779.4 L1794.72 802.5 L1794.99 798.1 L1795.26 819.2 L1795.53 819.2 L1795.80 804.7 L1796.07 775.4 L1796.34 805.3 L1796.61 796.7 L1796.88 809.6 L1797.15 785.6 L1797.42 819.2 L1797.69 817.8 L1797.96 797.8 L1798.23 780.4 L1798.50 807.7 L1798.77 819.2 L1799.04 810.8 L1799.31 802.4 L1799.58 789.5 L1799.85 764.7 L1800.12 797.7 L1800.39 776.1 L1800.66 790.9 L1800.93 809.9 L1801.20 764.2 L1801.47 784.9 L1801.74 791.9 L1802.01 819.2 L1802.28 790.0 L1802.55 763.7 L1802.82 799.1 L1803.09 819.2 L1803.36 806.6 L1803.63 782.5 L1803.90 775.9 L1804.17 785.6 L1804.44 819.2 L1804.71 809.9 L1804.98 796.0 L1805.25 794.4 L1805.52 796.0 L1805.79 790.7 L1806.06 798.2 L1806.33 787.7 L1806.60 782.4 L1806.87 795.7 L1807.14 799.0 L1807.41 810.7 L1807.68 795.7 L1807.95 778.2 L1808.22 779.4 L1808.49 794.0 L1808.76 789.7 L1809.03 764.9 L1809.30 804.8 L1809.57 759.6 L1809.84 789.2 L1810.11 776.4 L1810.38 801.6 L1810.65 779.2 L1810.92 809.3 L1811.19 768.7 L1811.46 810.0 L1811.73 805.7 L1812.00 791.8 L1812.27 794.8 L1812.54 749.8 L1812.81 809.7 L1813.08 766.4 L1813.35 799.0 L1813.62 809.6 L1813.89 791.2 L1814.16 796.6 L1814.43 819.2 L1814.70 774.9 L1814.97 796.6 L1815.24 811.1 L1815.51 801.7 L1815.78 801.0 L1816.05 813.0 L1816.32 799.0 L1816.59 794.7 L1816.86 789.0 L1817.13 813.9 L1817.40 800.7 L1817.67 812.8 L1817.94 819.2 L1818.21 812.6 L1818.48 819.2 L1818.75 819.2 L1819.02 803.7 L1819.29 773.7 L1819.56 772.4 L1819.83 811.6 L1820.10 819.2 L1820.37 762.3 L1820.64 811.8 L1820.91 791.1 L1821.18 805.7 L1821.45 819.2 L1821.72 819.2 L1821.99 819.1 L1822.26 804.5 L1822.53 805.8 L1822.80 801.9 L1823.07 819.2 L1823.34 816.7 L1823.61 819.2 L1823.88 798.0 L1824.15 765.5 L1824.42 783.3 L1824.69 787.6 L1824.96 817.4 L1825.23 791.4 L1825.50 789.9 L1825.77 795.6 L1826.04 806.1 L1826.31 806.7 L1826.58 788.3 L1826.85 810.5 L1827.12 772.2 L1827.39 808.7 L1827.66 774.8 L1827.93 811.3 L1828.20 812.8 L1828.47 776.7 L1828.74 795.8 L1829.01 804.6 L1829.28 803.6 L1829.55 813.6 L1829.82 806.0 L1830.09 782.0 L1830.36 803.5 L1830.63 799.8 L1830.90 776.9 L1831.17 818.1 L1831.44 782.3 L1831.71 800.5 L1831.98 819.2 L1832.25 815.5 L1832.52 819.2 L1832.79 817.0 L1833.06 760.8 L1833.33 778.1 L1833.60 769.0 L1833.87 808.2 L1834.14 819.2 L1834.41 791.9 L1834.68 798.0 L1834.95 782.9 L1835.22 776.2 L1835.49 767.9 L1835.76 819.2 L1836.03 779.3 L1836.30 790.9 L1836.57 784.3 L1836.84 814.2 L1837.11 809.3 L1837.38 800.0 L1837.65 816.9 L1837.92 801.0 L1838.19 800.5 L1838.46 767.2 L1838.73 779.1 L1839.00 817.8 L1839.27 819.2 L1839.54 774.8 L1839.81 805.4 L1840.08 803.1 L1840.35 819.2 L1840.62 780.1 L1840.89 801.2 L1841.16 813.4 L1841.43 816.3 L1841.70 810.4 L1841.97 796.5 L1842.24 768.3 L1842.51 781.4 L1842.78 810.5" fill="none" stroke="#ffffff" stroke-opacity="0.92" stroke-width="0.85" stroke-linejoin="bevel"/><rect x="1443.3" y="723" width="1" height="96.20000000000005" fill="#e6e68c"/><rect x="1358.75" y="465.0" width="484.54999999999995" height="354.20000000000005" fill="none" stroke="#9a9a9a" stroke-width="2"/><circle cx="1479.5" cy="644.5" r="6" fill="#ffee00"/><circle cx="1487.75" cy="686.25" r="6" fill="#1e9be0"/><circle cx="1524" cy="678.25" r="6" fill="#e01010"/><circle cx="1443.75" cy="723.25" r="6" fill="#8a2be2"/></svg>
<span class="t" style="left:1302.43px;top:455px;font-size:20.5px;color:#ffffff;">-10.0</span>
<span class="t" style="left:1302.43px;top:526px;font-size:20.5px;color:#ffffff;">-20.0</span>
<span class="t" style="left:1302.43px;top:597px;font-size:20.5px;color:#ffffff;">-30.0</span>
<span class="t" style="left:1302.43px;top:668px;font-size:20.5px;color:#ffffff;">-40.0</span>
<span class="t" style="left:1302.43px;top:739px;font-size:20.5px;color:#ffffff;">-50.0</span>
<span class="t" style="left:1302.43px;top:810px;font-size:20.5px;color:#ffffff;">-60.0</span>
<span class="t" style="left:1369.91px;top:829px;font-size:14px;color:#ffffff;">-60</span>
<span class="t" style="left:1402.30px;top:849px;font-size:14px;color:#ffffff;">-40</span>
<span class="t" style="left:1434.69px;top:829px;font-size:14px;color:#ffffff;">-20</span>
<span class="t" style="left:1475.30px;top:849px;font-size:14px;color:#ffffff;">0</span>
<span class="t" style="left:1503.80px;top:829px;font-size:14px;color:#ffffff;">20</span>
<span class="t" style="left:1536.19px;top:849px;font-size:14px;color:#ffffff;">40</span>
<span class="t" style="left:1568.58px;top:829px;font-size:14px;color:#ffffff;">60</span>
<span class="t" style="left:1600.97px;top:849px;font-size:14px;color:#ffffff;">80</span>
<span class="t" style="left:1628.96px;top:829px;font-size:14px;color:#ffffff;">100</span>
<span class="t" style="left:1661.35px;top:849px;font-size:14px;color:#ffffff;">120</span>
<span class="t" style="left:1693.74px;top:829px;font-size:14px;color:#ffffff;">140</span>
<span class="t" style="left:1726.13px;top:849px;font-size:14px;color:#ffffff;">160</span>
<span class="t" style="left:1758.52px;top:829px;font-size:14px;color:#ffffff;">180</span>
<span class="t" style="left:1791.41px;top:849px;font-size:14px;color:#ffffff;">200</span>
<span class="t" style="left:1823.80px;top:829px;font-size:14px;color:#ffffff;">220</span>
<span class="t" style="left:1490.25px;top:872px;font-size:19px;color:#ffffff;letter-spacing:0.559px;">Distance Difference (km)</span>
<span class="t" style="left:1279.50px;top:709.00px;font-size:19px;color:#ffffff;transform-origin:0 0;transform:rotate(-90deg) translate(-1.00px,-16.09px);letter-spacing:0.340px;">Magnitude (dB)</span>
</div></body></html>
